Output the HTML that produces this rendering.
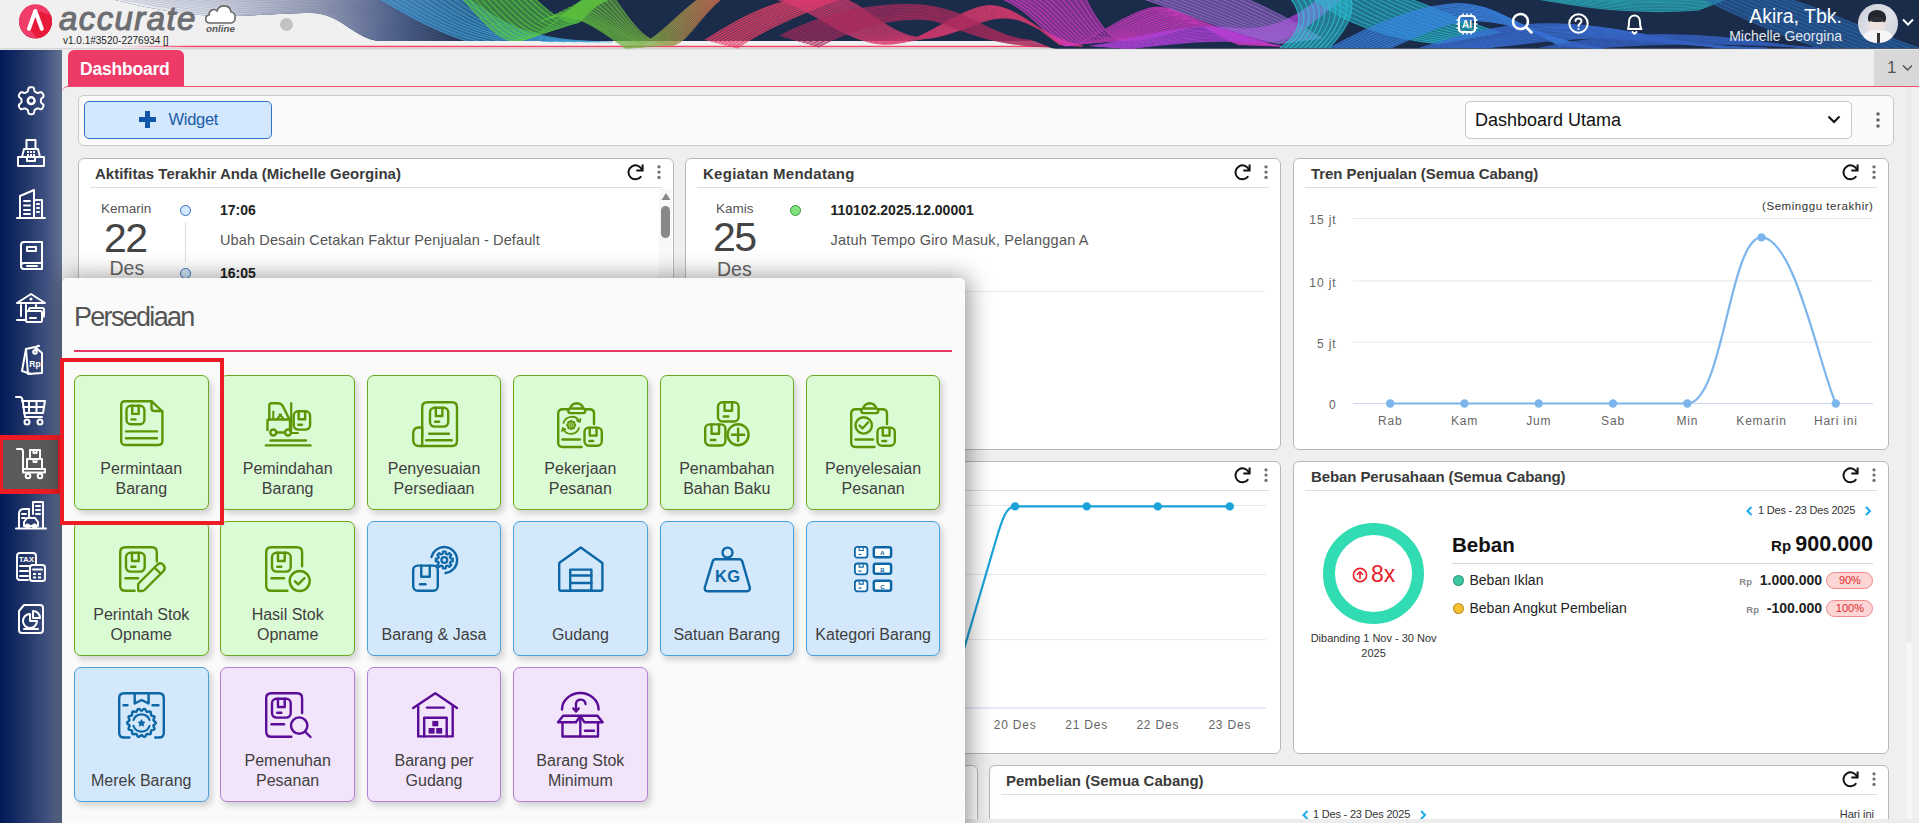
<!DOCTYPE html>
<html><head><meta charset="utf-8"><style>
*{box-sizing:border-box;margin:0;padding:0}
html,body{width:1919px;height:823px;overflow:hidden;background:#efefef;font-family:"Liberation Sans",sans-serif;color:#333}
body{position:relative}
.a{position:absolute}
.nw{white-space:nowrap}
#side{left:0;top:50px;width:62px;height:773px;background:linear-gradient(to right,#001a57 0%,#0f2660 20%,#25396a 45%,#3d4f7f 72%,#63718f 100%)}
.card{position:absolute;background:#fff;border:1px solid #b8b8b8;border-radius:6px;overflow:hidden}
.ct{position:absolute;left:16px;top:6px;font-size:15px;font-weight:bold;color:#3a3a3a;white-space:nowrap}
.cs{position:absolute;left:11px;right:11px;top:28px;height:1px;background:#dddddd}
.rf{position:absolute;top:6px;width:16px;height:16px}
.dt{position:absolute;top:6px;width:4px;height:16px}
.tile{position:absolute;width:134.5px;height:134.5px;border-radius:7px;border:1px solid;box-shadow:3px 4px 6px rgba(0,0,0,.16);text-align:center}
.tile .l{position:absolute;left:-10px;right:-10px;top:83px;font-size:16px;line-height:20px;color:#3f3f3f;white-space:nowrap}
.tile .l.one{top:103px}
.tile svg{position:absolute;overflow:visible}
.g{background:#dbfbd5;border-color:#6aa820}
.b{background:#d4e8fc;border-color:#4aa0da}
.p{background:#f2e4fa;border-color:#b47fd7}
.sico{position:absolute;left:14px;width:34px;height:34px;overflow:visible}
</style></head><body>

<div id="hdr" class="a" style="left:0;top:0;width:1919px;height:50px;overflow:hidden">
 <div class="a" style="left:0;top:0;width:1919px;height:48px;background:#f0f0f0;box-shadow:0 1px 2px rgba(0,0,0,.15)"></div>
 <svg class="a" style="left:0;top:0" width="1919" height="48" viewBox="0 0 1919 48">
  <defs>
   <linearGradient id="hg1" x1="0" y1="0" x2="1" y2="0">
    <stop offset="0" stop-color="#c8cbd8"/><stop offset="0.08" stop-color="#8a93b0"/><stop offset="0.16" stop-color="#3a6a9a"/><stop offset="0.25" stop-color="#1d2d4d"/><stop offset="1" stop-color="#1b2c4b"/>
   </linearGradient>
  </defs>
  <defs><linearGradient id="rl" gradientUnits="userSpaceOnUse" x1="120" y1="0" x2="190" y2="0"><stop offset="0" stop-color="#ee4466" stop-opacity="0"/><stop offset="1" stop-color="#ee4466"/></linearGradient></defs><line x1="62" y1="46.5" x2="1050" y2="46.5" stroke="url(#rl)" stroke-width="1.6"/>
 </svg>
 
 <svg class="a" style="left:0;top:0" width="1919" height="49" viewBox="0 0 1919 49">
  <defs>
   <clipPath id="navyclip"><path d="M115,0 C150,8 180,16 230,16 C270,15 290,13 310,13 C340,12 355,40 380,41 L1030,41 C1040,41 1045,48.8 1058,48.8 L1919,48.8 L1919,0 Z"/></clipPath>
   <clipPath id="ribclip"><path d="M115,0 C150,8 180,16 230,16 C270,15 290,13 310,13 C340,12 355,40 380,41 L540,41 L560,49 L1919,49 L1919,0 Z"/></clipPath>
   <linearGradient id="gA" gradientUnits="userSpaceOnUse" x1="110" y1="0" x2="470" y2="0"><stop offset="0" stop-color="#eef0f4"/><stop offset="0.3" stop-color="#d4d8e4"/><stop offset="0.55" stop-color="#a0a6bc"/><stop offset="0.8" stop-color="#4a5c88"/><stop offset="1" stop-color="#1b2c4b"/></linearGradient>
   <linearGradient id="gGO" gradientUnits="userSpaceOnUse" x1="540" y1="0" x2="720" y2="0"><stop offset="0" stop-color="#56c83a"/><stop offset="0.55" stop-color="#6fb040"/><stop offset="1" stop-color="#d06a50"/></linearGradient>
  </defs>
  <g clip-path="url(#navyclip)">
   <rect x="0" y="0" width="1919" height="49" fill="#1b2c4b"/>
   <rect x="100" y="0" width="370" height="48" fill="url(#gA)"/>
   <g fill="none" stroke="#6a7498" stroke-width=".8" opacity=".35"><path d="M118.0,-1.0 C170.0,8.0 210.0,17.0 250.0,16.0 C290.0,14.0 310.0,11.0 330.0,14.0 C352.0,18.0 366.0,38.0 400.0,42.0"/><path d="M126.2,-1.2 C177.0,7.1 217.0,15.3 256.5,14.3 C294.5,12.4 314.0,10.1 334.0,13.2 C356.8,17.4 372.4,36.7 408.0,41.8"/><path d="M134.4,-1.4 C184.0,6.2 224.0,13.6 263.0,12.6 C299.0,10.8 318.0,9.2 338.0,12.4 C361.6,16.8 378.8,35.4 416.0,41.6"/><path d="M142.6,-1.6 C191.0,5.3 231.0,11.9 269.5,10.9 C303.5,9.2 322.0,8.3 342.0,11.6 C366.4,16.2 385.2,34.1 424.0,41.4"/><path d="M150.8,-1.8 C198.0,4.4 238.0,10.2 276.0,9.2 C308.0,7.6 326.0,7.4 346.0,10.8 C371.2,15.6 391.6,32.8 432.0,41.2"/><path d="M159.0,-2.0 C205.0,3.5 245.0,8.5 282.5,7.5 C312.5,6.0 330.0,6.5 350.0,10.0 C376.0,15.0 398.0,31.5 440.0,41.0"/><path d="M167.2,-2.2 C212.0,2.6 252.0,6.8 289.0,5.8 C317.0,4.4 334.0,5.6 354.0,9.2 C380.8,14.4 404.4,30.2 448.0,40.8"/><path d="M175.4,-2.4 C219.0,1.7 259.0,5.1 295.5,4.1 C321.5,2.8 338.0,4.7 358.0,8.4 C385.6,13.8 410.8,28.9 456.0,40.6"/><path d="M183.6,-2.6 C226.0,0.8 266.0,3.4 302.0,2.4 C326.0,1.2 342.0,3.8 362.0,7.6 C390.4,13.2 417.2,27.6 464.0,40.4"/><path d="M191.8,-2.8 C233.0,-0.1 273.0,1.7 308.5,0.7 C330.5,-0.4 346.0,2.9 366.0,6.8 C395.2,12.6 423.6,26.3 472.0,40.2"/><path d="M200.0,-3.0 C240.0,-1.0 280.0,0.0 315.0,-1.0 C335.0,-2.0 350.0,2.0 370.0,6.0 C400.0,12.0 430.0,25.0 480.0,40.0"/></g>
  </g>
  <g clip-path="url(#ribclip)">
   <path d="M378.0,-2.0 C400.0,10.0 430.0,30.0 470.0,42.0 L612.5,42.0 C525.0,41.2 504.5,24.0 467.3,-2.0 Z" fill="#3fa0d8" opacity=".5"/>
<g fill="none" stroke="#3fa0d8" stroke-width="1.1" opacity=".75"><path d="M378.0,-2.0 C400.0,10.0 430.0,30.0 470.0,42.0"/><path d="M385.4,-2.0 C408.7,11.2 437.9,30.9 481.9,42.0"/><path d="M392.9,-2.0 C417.4,12.3 445.8,31.9 493.8,42.0"/><path d="M400.3,-2.0 C426.1,13.5 453.8,32.8 505.6,42.0"/><path d="M407.8,-2.0 C434.8,14.7 461.7,33.7 517.5,42.0"/><path d="M415.2,-2.0 C443.5,15.8 469.6,34.7 529.4,42.0"/><path d="M422.6,-2.0 C452.2,17.0 477.5,35.6 541.2,42.0"/><path d="M430.1,-2.0 C461.0,18.2 485.4,36.5 553.1,42.0"/><path d="M437.5,-2.0 C469.7,19.3 493.3,37.5 565.0,42.0"/><path d="M445.0,-2.0 C478.4,20.5 501.2,38.4 576.9,42.0"/><path d="M452.4,-2.0 C487.1,21.7 509.2,39.3 588.8,42.0"/><path d="M459.9,-2.0 C495.8,22.8 517.1,40.3 600.6,42.0"/><path d="M467.3,-2.0 C504.5,24.0 525.0,41.2 612.5,42.0"/></g>
<path d="M462.0,-2.0 C482.0,20.0 498.0,41.0 515.0,41.0 C540.0,41.0 560.0,15.0 585.0,-2.0 L613.5,-2.0 C588.5,5.2 587.5,18.6 577.7,22.8 C568.3,25.6 554.2,17.2 534.2,-2.0 Z" fill="#5ad040" opacity=".5"/>
<g fill="none" stroke="#5ad040" stroke-width="1.1" opacity=".75"><path d="M462.0,-2.0 C482.0,20.0 498.0,41.0 515.0,41.0 C540.0,41.0 560.0,15.0 585.0,-2.0"/><path d="M468.0,-2.0 C488.0,19.8 503.9,39.7 520.2,39.5 C544.0,39.1 562.4,14.2 587.4,-2.0"/><path d="M474.0,-2.0 C494.0,19.5 509.7,38.4 525.5,38.0 C547.9,37.3 564.8,13.4 589.8,-2.0"/><path d="M480.1,-2.0 C500.1,19.3 515.6,37.1 530.7,36.5 C551.9,35.4 567.1,12.6 592.1,-2.0"/><path d="M486.1,-2.0 C506.1,19.1 521.4,35.9 535.9,34.9 C555.8,33.5 569.5,11.7 594.5,-2.0"/><path d="M492.1,-2.0 C512.1,18.8 527.3,34.6 541.1,33.4 C559.8,31.7 571.9,10.9 596.9,-2.0"/><path d="M498.1,-2.0 C518.1,18.6 533.1,33.3 546.4,31.9 C563.8,29.8 574.2,10.1 599.2,-2.0"/><path d="M504.1,-2.0 C524.1,18.4 539.0,32.0 551.6,30.4 C567.7,27.9 576.6,9.3 601.6,-2.0"/><path d="M510.1,-2.0 C530.1,18.1 544.9,30.7 556.8,28.9 C571.7,26.1 579.0,8.5 604.0,-2.0"/><path d="M516.2,-2.0 C536.2,17.9 550.7,29.5 562.0,27.4 C575.6,24.2 581.4,7.7 606.4,-2.0"/><path d="M522.2,-2.0 C542.2,17.7 556.6,28.2 567.2,25.8 C579.6,22.3 583.8,6.8 608.8,-2.0"/><path d="M528.2,-2.0 C548.2,17.4 562.4,26.9 572.5,24.3 C583.5,20.5 586.1,6.0 611.1,-2.0"/><path d="M534.2,-2.0 C554.2,17.2 568.3,25.6 577.7,22.8 C587.5,18.6 588.5,5.2 613.5,-2.0"/></g>
<path d="M540.0,22.0 C570.0,5.0 600.0,30.0 625.0,48.0 C650.0,50.0 675.0,15.0 700.0,-2.0 L722.8,-2.0 C703.5,10.8 688.0,43.0 672.5,45.2 C638.0,44.0 627.0,12.0 606.5,-11.6 Z" fill="url(#gGO)" opacity=".5"/>
<g fill="none" stroke="url(#gGO)" stroke-width="1.1" opacity=".75"><path d="M540.0,22.0 C570.0,5.0 600.0,30.0 625.0,48.0 C650.0,50.0 675.0,15.0 700.0,-2.0"/><path d="M544.8,19.6 C574.1,5.5 602.7,31.0 628.4,47.8 C652.7,49.5 677.0,14.7 701.6,-2.0"/><path d="M549.5,17.2 C578.1,6.0 605.4,32.0 631.8,47.6 C655.4,49.0 679.1,14.4 703.3,-2.0"/><path d="M554.2,14.8 C582.2,6.5 608.1,33.0 635.2,47.4 C658.1,48.5 681.1,14.1 704.9,-2.0"/><path d="M559.0,12.4 C586.3,7.0 610.9,34.0 638.6,47.2 C660.9,48.0 683.1,13.8 706.5,-2.0"/><path d="M563.8,10.0 C590.4,7.5 613.6,35.0 642.0,47.0 C663.6,47.5 685.2,13.5 708.1,-2.0"/><path d="M568.5,7.6 C594.4,8.0 616.3,36.0 645.4,46.8 C666.3,47.0 687.2,13.2 709.8,-2.0"/><path d="M573.2,5.2 C598.5,8.5 619.0,37.0 648.8,46.6 C669.0,46.5 689.2,12.9 711.4,-2.0"/><path d="M578.0,2.8 C602.6,9.0 621.7,38.0 652.1,46.4 C671.7,46.0 691.3,12.6 713.0,-2.0"/><path d="M582.8,0.4 C606.6,9.5 624.4,39.0 655.5,46.2 C674.4,45.5 693.3,12.3 714.7,-2.0"/><path d="M587.5,-2.0 C610.7,10.0 627.1,40.0 658.9,46.0 C677.1,45.0 695.4,12.0 716.3,-2.0"/><path d="M592.2,-4.4 C614.8,10.5 629.9,41.0 662.3,45.8 C679.9,44.5 697.4,11.7 717.9,-2.0"/><path d="M597.0,-6.8 C618.9,11.0 632.6,42.0 665.7,45.6 C682.6,44.0 699.4,11.4 719.5,-2.0"/><path d="M601.8,-9.2 C622.9,11.5 635.3,43.0 669.1,45.4 C685.3,43.5 701.5,11.1 721.2,-2.0"/><path d="M606.5,-11.6 C627.0,12.0 638.0,44.0 672.5,45.2 C688.0,43.0 703.5,10.8 722.8,-2.0"/></g>
<path d="M705.0,40.0 C730.0,25.0 760.0,5.0 800.0,-2.0 L841.8,-2.0 C798.0,14.8 758.5,32.0 737.3,48.4 Z" fill="#e8406a" opacity=".5"/>
<g fill="none" stroke="#e8406a" stroke-width="1.1" opacity=".75"><path d="M705.0,40.0 C730.0,25.0 760.0,5.0 800.0,-2.0"/><path d="M708.2,40.8 C732.9,25.7 763.8,6.0 804.2,-2.0"/><path d="M711.5,41.7 C735.7,26.4 767.6,7.0 808.4,-2.0"/><path d="M714.7,42.5 C738.5,27.1 771.4,7.9 812.5,-2.0"/><path d="M717.9,43.4 C741.4,27.8 775.2,8.9 816.7,-2.0"/><path d="M721.1,44.2 C744.2,28.5 779.0,9.9 820.9,-2.0"/><path d="M724.4,45.0 C747.1,29.2 782.8,10.9 825.1,-2.0"/><path d="M727.6,45.9 C749.9,29.9 786.6,11.9 829.3,-2.0"/><path d="M730.8,46.7 C752.8,30.6 790.4,12.8 833.4,-2.0"/><path d="M734.1,47.6 C755.6,31.3 794.2,13.8 837.6,-2.0"/><path d="M737.3,48.4 C758.5,32.0 798.0,14.8 841.8,-2.0"/></g>
<path d="M770.0,-2.0 C810.0,5.0 840.0,40.0 880.0,44.0 C920.0,48.0 950.0,12.0 985.0,6.0 C1010.0,2.0 1040.0,30.0 1060.0,45.0 L1082.8,46.4 C1040.0,37.0 1029.0,13.2 994.5,18.6 C969.0,23.2 939.0,45.2 908.5,35.6 C878.0,26.0 857.5,-2.0 836.5,-2.0 Z" fill="#dc3a70" opacity=".5"/>
<g fill="none" stroke="#dc3a70" stroke-width="1.1" opacity=".75"><path d="M770.0,-2.0 C810.0,5.0 840.0,40.0 880.0,44.0 C920.0,48.0 950.0,12.0 985.0,6.0 C1010.0,2.0 1040.0,30.0 1060.0,45.0"/><path d="M774.8,-2.0 C813.4,4.5 842.7,39.0 882.0,43.4 C921.4,47.8 951.4,12.8 985.7,6.9 C1011.4,2.8 1040.0,30.5 1061.6,45.1"/><path d="M779.5,-2.0 C816.8,4.0 845.4,38.0 884.1,42.8 C922.7,47.6 952.7,13.6 986.4,7.8 C1012.7,3.6 1040.0,31.0 1063.3,45.2"/><path d="M784.2,-2.0 C820.2,3.5 848.1,37.0 886.1,42.2 C924.1,47.4 954.1,14.4 987.0,8.7 C1014.1,4.4 1040.0,31.5 1064.9,45.3"/><path d="M789.0,-2.0 C823.6,3.0 850.9,36.0 888.1,41.6 C925.4,47.2 955.4,15.2 987.7,9.6 C1015.4,5.2 1040.0,32.0 1066.5,45.4"/><path d="M793.8,-2.0 C827.0,2.5 853.6,35.0 890.2,41.0 C926.8,47.0 956.8,16.0 988.4,10.5 C1016.8,6.0 1040.0,32.5 1068.1,45.5"/><path d="M798.5,-2.0 C830.4,2.0 856.3,34.0 892.2,40.4 C928.1,46.8 958.1,16.8 989.1,11.4 C1018.1,6.8 1040.0,33.0 1069.8,45.6"/><path d="M803.2,-2.0 C833.8,1.5 859.0,33.0 894.2,39.8 C929.5,46.6 959.5,17.6 989.8,12.3 C1019.5,7.6 1040.0,33.5 1071.4,45.7"/><path d="M808.0,-2.0 C837.1,1.0 861.7,32.0 896.3,39.2 C930.9,46.4 960.9,18.4 990.4,13.2 C1020.9,8.4 1040.0,34.0 1073.0,45.8"/><path d="M812.8,-2.0 C840.5,0.5 864.4,31.0 898.3,38.6 C932.2,46.2 962.2,19.2 991.1,14.1 C1022.2,9.2 1040.0,34.5 1074.7,45.9"/><path d="M817.5,-2.0 C843.9,-0.0 867.1,30.0 900.4,38.0 C933.6,46.0 963.6,20.0 991.8,15.0 C1023.6,10.0 1040.0,35.0 1076.3,46.0"/><path d="M822.2,-2.0 C847.3,-0.5 869.9,29.0 902.4,37.4 C934.9,45.8 964.9,20.8 992.5,15.9 C1024.9,10.8 1040.0,35.5 1077.9,46.1"/><path d="M827.0,-2.0 C850.7,-1.0 872.6,28.0 904.4,36.8 C936.3,45.6 966.3,21.6 993.1,16.8 C1026.3,11.6 1040.0,36.0 1079.5,46.2"/><path d="M831.8,-2.0 C854.1,-1.5 875.3,27.0 906.5,36.2 C937.6,45.4 967.6,22.4 993.8,17.7 C1027.6,12.4 1040.0,36.5 1081.2,46.3"/><path d="M836.5,-2.0 C857.5,-2.0 878.0,26.0 908.5,35.6 C939.0,45.2 969.0,23.2 994.5,18.6 C1029.0,13.2 1040.0,37.0 1082.8,46.4"/></g>
<path d="M780.0,36.0 C820.0,14.0 880.0,0.0 930.0,6.0 C970.0,12.0 1000.0,40.0 1030.0,40.0 L1049.0,47.0 C981.0,45.6 951.0,23.2 930.0,20.0 C899.0,16.8 858.0,25.2 818.0,47.2 Z" fill="#a82a5c" opacity=".5"/>
<g fill="none" stroke="#a82a5c" stroke-width="1.1" opacity=".75"><path d="M780.0,36.0 C820.0,14.0 880.0,0.0 930.0,6.0 C970.0,12.0 1000.0,40.0 1030.0,40.0"/><path d="M783.8,37.1 C823.8,15.1 881.9,1.7 930.0,7.4 C968.1,13.1 998.1,40.6 1031.9,40.7"/><path d="M787.6,38.2 C827.6,16.2 883.8,3.4 930.0,8.8 C966.2,14.2 996.2,41.1 1033.8,41.4"/><path d="M791.4,39.4 C831.4,17.4 885.7,5.0 930.0,10.2 C964.3,15.4 994.3,41.7 1035.7,42.1"/><path d="M795.2,40.5 C835.2,18.5 887.6,6.7 930.0,11.6 C962.4,16.5 992.4,42.2 1037.6,42.8"/><path d="M799.0,41.6 C839.0,19.6 889.5,8.4 930.0,13.0 C960.5,17.6 990.5,42.8 1039.5,43.5"/><path d="M802.8,42.7 C842.8,20.7 891.4,10.1 930.0,14.4 C958.6,18.7 988.6,43.4 1041.4,44.2"/><path d="M806.6,43.8 C846.6,21.8 893.3,11.8 930.0,15.8 C956.7,19.8 986.7,43.9 1043.3,44.9"/><path d="M810.4,45.0 C850.4,23.0 895.2,13.4 930.0,17.2 C954.8,21.0 984.8,44.5 1045.2,45.6"/><path d="M814.2,46.1 C854.2,24.1 897.1,15.1 930.0,18.6 C952.9,22.1 982.9,45.0 1047.1,46.3"/><path d="M818.0,47.2 C858.0,25.2 899.0,16.8 930.0,20.0 C951.0,23.2 981.0,45.6 1049.0,47.0"/></g>
<path d="M1000.0,-2.0 C1030.0,10.0 1045.0,35.0 1065.0,46.0 C1090.0,46.0 1110.0,20.0 1150.0,8.0 C1180.0,2.0 1200.0,30.0 1240.0,45.0 L1281.8,46.4 C1238.0,38.4 1218.0,21.6 1188.0,27.6 C1167.0,34.0 1128.0,46.0 1112.5,37.6 C1102.0,28.0 1090.8,10.0 1085.5,-2.0 Z" fill="#d43ac4" opacity=".5"/>
<g fill="none" stroke="#d43ac4" stroke-width="1.1" opacity=".75"><path d="M1000.0,-2.0 C1030.0,10.0 1045.0,35.0 1065.0,46.0 C1090.0,46.0 1110.0,20.0 1150.0,8.0 C1180.0,2.0 1200.0,30.0 1240.0,45.0"/><path d="M1006.1,-2.0 C1034.3,10.0 1049.1,34.5 1068.4,45.4 C1092.7,46.0 1114.1,21.0 1152.7,9.4 C1182.7,3.4 1202.7,30.6 1243.0,45.1"/><path d="M1012.2,-2.0 C1038.7,10.0 1053.1,34.0 1071.8,44.8 C1095.4,46.0 1118.1,22.0 1155.4,10.8 C1185.4,4.8 1205.4,31.2 1246.0,45.2"/><path d="M1018.3,-2.0 C1043.0,10.0 1057.2,33.5 1075.2,44.2 C1098.1,46.0 1122.2,23.0 1158.1,12.2 C1188.1,6.2 1208.1,31.8 1249.0,45.3"/><path d="M1024.4,-2.0 C1047.4,10.0 1061.3,33.0 1078.6,43.6 C1100.9,46.0 1126.3,24.0 1160.9,13.6 C1190.9,7.6 1210.9,32.4 1251.9,45.4"/><path d="M1030.5,-2.0 C1051.7,10.0 1065.4,32.5 1082.0,43.0 C1103.6,46.0 1130.4,25.0 1163.6,15.0 C1193.6,9.0 1213.6,33.0 1254.9,45.5"/><path d="M1036.6,-2.0 C1056.1,10.0 1069.4,32.0 1085.4,42.4 C1106.3,46.0 1134.4,26.0 1166.3,16.4 C1196.3,10.4 1216.3,33.6 1257.9,45.6"/><path d="M1042.8,-2.0 C1060.4,10.0 1073.5,31.5 1088.8,41.8 C1109.0,46.0 1138.5,27.0 1169.0,17.8 C1199.0,11.8 1219.0,34.2 1260.9,45.7"/><path d="M1048.9,-2.0 C1064.7,10.0 1077.6,31.0 1092.1,41.2 C1111.7,46.0 1142.6,28.0 1171.7,19.2 C1201.7,13.2 1221.7,34.8 1263.9,45.8"/><path d="M1055.0,-2.0 C1069.1,10.0 1081.6,30.5 1095.5,40.6 C1114.4,46.0 1146.6,29.0 1174.4,20.6 C1204.4,14.6 1224.4,35.4 1266.9,45.9"/><path d="M1061.1,-2.0 C1073.4,10.0 1085.7,30.0 1098.9,40.0 C1117.1,46.0 1150.7,30.0 1177.1,22.0 C1207.1,16.0 1227.1,36.0 1269.9,46.0"/><path d="M1067.2,-2.0 C1077.8,10.0 1089.8,29.5 1102.3,39.4 C1119.9,46.0 1154.8,31.0 1179.9,23.4 C1209.9,17.4 1229.9,36.6 1272.8,46.1"/><path d="M1073.3,-2.0 C1082.1,10.0 1093.9,29.0 1105.7,38.8 C1122.6,46.0 1158.9,32.0 1182.6,24.8 C1212.6,18.8 1232.6,37.2 1275.8,46.2"/><path d="M1079.4,-2.0 C1086.5,10.0 1097.9,28.5 1109.1,38.2 C1125.3,46.0 1162.9,33.0 1185.3,26.2 C1215.3,20.2 1235.3,37.8 1278.8,46.3"/><path d="M1085.5,-2.0 C1090.8,10.0 1102.0,28.0 1112.5,37.6 C1128.0,46.0 1167.0,34.0 1188.0,27.6 C1218.0,21.6 1238.0,38.4 1281.8,46.4"/></g>
<path d="M1090.0,46.0 C1140.0,40.0 1180.0,22.0 1230.0,28.0 C1270.0,33.0 1295.0,18.0 1320.0,-2.0 L1342.8,-2.0 C1304.5,29.2 1289.0,45.6 1249.0,42.0 C1199.0,38.8 1159.0,45.6 1128.0,48.8 Z" fill="#b040d8" opacity=".5"/>
<g fill="none" stroke="#b040d8" stroke-width="1.1" opacity=".75"><path d="M1090.0,46.0 C1140.0,40.0 1180.0,22.0 1230.0,28.0 C1270.0,33.0 1295.0,18.0 1320.0,-2.0"/><path d="M1093.8,46.3 C1141.9,40.6 1181.9,23.7 1231.9,29.4 C1271.9,34.3 1296.0,19.1 1322.3,-2.0"/><path d="M1097.6,46.6 C1143.8,41.1 1183.8,25.4 1233.8,30.8 C1273.8,35.5 1296.9,20.2 1324.6,-2.0"/><path d="M1101.4,46.8 C1145.7,41.7 1185.7,27.0 1235.7,32.2 C1275.7,36.8 1297.8,21.4 1326.8,-2.0"/><path d="M1105.2,47.1 C1147.6,42.2 1187.6,28.7 1237.6,33.6 C1277.6,38.0 1298.8,22.5 1329.1,-2.0"/><path d="M1109.0,47.4 C1149.5,42.8 1189.5,30.4 1239.5,35.0 C1279.5,39.3 1299.8,23.6 1331.4,-2.0"/><path d="M1112.8,47.7 C1151.4,43.4 1191.4,32.1 1241.4,36.4 C1281.4,40.6 1300.7,24.7 1333.7,-2.0"/><path d="M1116.6,48.0 C1153.3,43.9 1193.3,33.8 1243.3,37.8 C1283.3,41.8 1301.7,25.8 1336.0,-2.0"/><path d="M1120.4,48.2 C1155.2,44.5 1195.2,35.4 1245.2,39.2 C1285.2,43.1 1302.6,27.0 1338.2,-2.0"/><path d="M1124.2,48.5 C1157.1,45.0 1197.1,37.1 1247.1,40.6 C1287.1,44.3 1303.5,28.1 1340.5,-2.0"/><path d="M1128.0,48.8 C1159.0,45.6 1199.0,38.8 1249.0,42.0 C1289.0,45.6 1304.5,29.2 1342.8,-2.0"/></g>
<path d="M1140.0,-2.0 C1180.0,10.0 1220.0,30.0 1280.0,44.0 L1321.8,38.4 C1299.8,24.4 1265.5,7.2 1244.5,-2.0 Z" fill="#9a6ad0" opacity=".5"/>
<g fill="none" stroke="#9a6ad0" stroke-width="1.1" opacity=".75"><path d="M1140.0,-2.0 C1180.0,10.0 1220.0,30.0 1280.0,44.0"/><path d="M1148.7,-2.0 C1187.1,9.8 1226.6,29.5 1283.5,43.5"/><path d="M1157.4,-2.0 C1194.2,9.5 1233.3,29.1 1287.0,43.1"/><path d="M1166.1,-2.0 C1201.4,9.3 1240.0,28.6 1290.5,42.6"/><path d="M1174.8,-2.0 C1208.5,9.1 1246.6,28.1 1293.9,42.1"/><path d="M1183.5,-2.0 C1215.6,8.8 1253.2,27.7 1297.4,41.7"/><path d="M1192.2,-2.0 C1222.8,8.6 1259.9,27.2 1300.9,41.2"/><path d="M1201.0,-2.0 C1229.9,8.4 1266.5,26.7 1304.4,40.7"/><path d="M1209.7,-2.0 C1237.0,8.1 1273.2,26.3 1307.9,40.3"/><path d="M1218.4,-2.0 C1244.1,7.9 1279.8,25.8 1311.3,39.8"/><path d="M1227.1,-2.0 C1251.2,7.7 1286.5,25.3 1314.8,39.3"/><path d="M1235.8,-2.0 C1258.4,7.4 1293.2,24.9 1318.3,38.9"/><path d="M1244.5,-2.0 C1265.5,7.2 1299.8,24.4 1321.8,38.4"/></g>
<path d="M1290.0,-2.0 C1305.0,16.0 1300.0,34.0 1280.0,48.0 L1329.4,48.0 C1341.8,34.0 1356.3,16.0 1350.8,-2.0 Z" fill="#30c8d8" opacity=".5"/>
<g fill="none" stroke="#30c8d8" stroke-width="1.1" opacity=".75"><path d="M1290.0,-2.0 C1305.0,16.0 1300.0,34.0 1280.0,48.0"/><path d="M1296.1,-2.0 C1310.1,16.0 1304.2,34.0 1284.9,48.0"/><path d="M1302.2,-2.0 C1315.3,16.0 1308.4,34.0 1289.9,48.0"/><path d="M1308.2,-2.0 C1320.4,16.0 1312.5,34.0 1294.8,48.0"/><path d="M1314.3,-2.0 C1325.5,16.0 1316.7,34.0 1299.8,48.0"/><path d="M1320.4,-2.0 C1330.7,16.0 1320.9,34.0 1304.7,48.0"/><path d="M1326.5,-2.0 C1335.8,16.0 1325.1,34.0 1309.6,48.0"/><path d="M1332.6,-2.0 C1340.9,16.0 1329.3,34.0 1314.6,48.0"/><path d="M1338.6,-2.0 C1346.0,16.0 1333.4,34.0 1319.5,48.0"/><path d="M1344.7,-2.0 C1351.2,16.0 1337.6,34.0 1324.5,48.0"/><path d="M1350.8,-2.0 C1356.3,16.0 1341.8,34.0 1329.4,48.0"/></g>
<path d="M1312.0,-2.0 C1340.0,20.0 1380.0,38.0 1440.0,44.0 L1500.8,32.8 C1459.8,21.2 1438.8,8.8 1407.0,-2.0 Z" fill="#2ab8cc" opacity=".5"/>
<g fill="none" stroke="#2ab8cc" stroke-width="1.1" opacity=".75"><path d="M1312.0,-2.0 C1340.0,20.0 1380.0,38.0 1440.0,44.0"/><path d="M1319.9,-2.0 C1348.2,19.1 1386.7,36.6 1445.1,43.1"/><path d="M1327.8,-2.0 C1356.5,18.1 1393.3,35.2 1450.1,42.1"/><path d="M1335.8,-2.0 C1364.7,17.2 1400.0,33.8 1455.2,41.2"/><path d="M1343.7,-2.0 C1372.9,16.3 1406.6,32.4 1460.3,40.3"/><path d="M1351.6,-2.0 C1381.2,15.3 1413.2,31.0 1465.3,39.3"/><path d="M1359.5,-2.0 C1389.4,14.4 1419.9,29.6 1470.4,38.4"/><path d="M1367.4,-2.0 C1397.6,13.5 1426.6,28.2 1475.5,37.5"/><path d="M1375.3,-2.0 C1405.9,12.5 1433.2,26.8 1480.5,36.5"/><path d="M1383.2,-2.0 C1414.1,11.6 1439.8,25.4 1485.6,35.6"/><path d="M1391.2,-2.0 C1422.3,10.7 1446.5,24.0 1490.7,34.7"/><path d="M1399.1,-2.0 C1430.6,9.7 1453.1,22.6 1495.7,33.7"/><path d="M1407.0,-2.0 C1438.8,8.8 1459.8,21.2 1500.8,32.8"/></g>
<path d="M1330.0,48.0 C1370.0,26.0 1410.0,8.0 1450.0,4.0 C1490.0,0.0 1520.0,26.0 1560.0,46.0 L1601.8,48.8 C1539.0,37.2 1509.0,19.6 1469.0,20.8 C1448.0,22.0 1427.0,31.6 1390.8,48.0 Z" fill="#3a84e4" opacity=".5"/>
<g fill="none" stroke="#3a84e4" stroke-width="1.1" opacity=".75"><path d="M1330.0,48.0 C1370.0,26.0 1410.0,8.0 1450.0,4.0 C1490.0,0.0 1520.0,26.0 1560.0,46.0"/><path d="M1335.1,48.0 C1374.8,26.5 1413.2,9.2 1451.6,5.4 C1491.6,1.6 1521.6,26.9 1563.5,46.2"/><path d="M1340.1,48.0 C1379.5,26.9 1416.3,10.3 1453.2,6.8 C1493.2,3.3 1523.2,27.9 1567.0,46.5"/><path d="M1345.2,48.0 C1384.2,27.4 1419.5,11.5 1454.8,8.2 C1494.8,4.9 1524.8,28.8 1570.5,46.7"/><path d="M1350.3,48.0 C1389.0,27.9 1422.7,12.7 1456.3,9.6 C1496.3,6.5 1526.3,29.7 1573.9,46.9"/><path d="M1355.3,48.0 C1393.8,28.3 1425.8,13.8 1457.9,11.0 C1497.9,8.2 1527.9,30.7 1577.4,47.2"/><path d="M1360.4,48.0 C1398.5,28.8 1429.0,15.0 1459.5,12.4 C1499.5,9.8 1529.5,31.6 1580.9,47.4"/><path d="M1365.5,48.0 C1403.2,29.3 1432.2,16.2 1461.1,13.8 C1501.1,11.4 1531.1,32.5 1584.4,47.6"/><path d="M1370.5,48.0 C1408.0,29.7 1435.3,17.3 1462.7,15.2 C1502.7,13.1 1532.7,33.5 1587.9,47.9"/><path d="M1375.6,48.0 C1412.8,30.2 1438.5,18.5 1464.2,16.6 C1504.2,14.7 1534.2,34.4 1591.3,48.1"/><path d="M1380.7,48.0 C1417.5,30.7 1441.7,19.7 1465.8,18.0 C1505.8,16.3 1535.8,35.3 1594.8,48.3"/><path d="M1385.7,48.0 C1422.2,31.1 1444.8,20.8 1467.4,19.4 C1507.4,18.0 1537.4,36.3 1598.3,48.6"/><path d="M1390.8,48.0 C1427.0,31.6 1448.0,22.0 1469.0,20.8 C1509.0,19.6 1539.0,37.2 1601.8,48.8"/></g>
<path d="M1420.0,48.0 C1460.0,36.0 1500.0,22.0 1560.0,24.0 C1620.0,26.0 1660.0,40.0 1720.0,48.0 L1767.5,48.0 C1698.0,48.4 1658.0,40.0 1598.0,38.0 C1557.0,38.8 1517.0,44.4 1486.5,48.0 Z" fill="#3a6fd8" opacity=".5"/>
<g fill="none" stroke="#3a6fd8" stroke-width="1.1" opacity=".75"><path d="M1420.0,48.0 C1460.0,36.0 1500.0,22.0 1560.0,24.0 C1620.0,26.0 1660.0,40.0 1720.0,48.0"/><path d="M1425.5,48.0 C1464.8,36.7 1504.8,23.4 1563.2,25.2 C1623.2,27.2 1663.2,40.7 1724.0,48.0"/><path d="M1431.1,48.0 C1469.5,37.4 1509.5,24.8 1566.3,26.3 C1626.3,28.3 1666.3,41.4 1727.9,48.0"/><path d="M1436.6,48.0 C1474.2,38.1 1514.2,26.2 1569.5,27.5 C1629.5,29.5 1669.5,42.1 1731.9,48.0"/><path d="M1442.2,48.0 C1479.0,38.8 1519.0,27.6 1572.7,28.7 C1632.7,30.7 1672.7,42.8 1735.8,48.0"/><path d="M1447.7,48.0 C1483.8,39.5 1523.8,29.0 1575.8,29.8 C1635.8,31.8 1675.8,43.5 1739.8,48.0"/><path d="M1453.2,48.0 C1488.5,40.2 1528.5,30.4 1579.0,31.0 C1639.0,33.0 1679.0,44.2 1743.8,48.0"/><path d="M1458.8,48.0 C1493.2,40.9 1533.2,31.8 1582.2,32.2 C1642.2,34.2 1682.2,44.9 1747.7,48.0"/><path d="M1464.3,48.0 C1498.0,41.6 1538.0,33.2 1585.3,33.3 C1645.3,35.3 1685.3,45.6 1751.7,48.0"/><path d="M1469.9,48.0 C1502.8,42.3 1542.8,34.6 1588.5,34.5 C1648.5,36.5 1688.5,46.3 1755.6,48.0"/><path d="M1475.4,48.0 C1507.5,43.0 1547.5,36.0 1591.7,35.7 C1651.7,37.7 1691.7,47.0 1759.6,48.0"/><path d="M1481.0,48.0 C1512.2,43.7 1552.2,37.4 1594.8,36.8 C1654.8,38.8 1694.8,47.7 1763.5,48.0"/><path d="M1486.5,48.0 C1517.0,44.4 1557.0,38.8 1598.0,38.0 C1658.0,40.0 1698.0,48.4 1767.5,48.0"/></g>
<path d="M1530.0,-2.0 C1570.0,4.0 1620.0,16.0 1700.0,10.0 L1741.8,-6.8 C1658.0,-0.8 1627.0,-1.6 1596.5,-2.0 Z" fill="#2aa6b4" opacity=".5"/>
<g fill="none" stroke="#2aa6b4" stroke-width="1.1" opacity=".75"><path d="M1530.0,-2.0 C1570.0,4.0 1620.0,16.0 1700.0,10.0"/><path d="M1536.7,-2.0 C1575.7,3.4 1623.8,14.3 1704.2,8.3"/><path d="M1543.3,-2.0 C1581.4,2.9 1627.6,12.6 1708.4,6.6"/><path d="M1550.0,-2.0 C1587.1,2.3 1631.4,11.0 1712.5,5.0"/><path d="M1556.6,-2.0 C1592.8,1.8 1635.2,9.3 1716.7,3.3"/><path d="M1563.2,-2.0 C1598.5,1.2 1639.0,7.6 1720.9,1.6"/><path d="M1569.9,-2.0 C1604.2,0.6 1642.8,5.9 1725.1,-0.1"/><path d="M1576.5,-2.0 C1609.9,0.1 1646.6,4.2 1729.3,-1.8"/><path d="M1583.2,-2.0 C1615.6,-0.5 1650.4,2.6 1733.4,-3.4"/><path d="M1589.9,-2.0 C1621.3,-1.0 1654.2,0.9 1737.6,-5.1"/><path d="M1596.5,-2.0 C1627.0,-1.6 1658.0,-0.8 1741.8,-6.8"/></g>
<path d="M1700.0,-2.0 C1740.0,16.0 1770.0,32.0 1820.0,48.0 L1918.8,48.0 C1849.8,23.6 1819.8,7.6 1785.5,-2.0 Z" fill="#2a68b0" opacity=".5"/>
<g fill="none" stroke="#2a68b0" stroke-width="1.1" opacity=".75"><path d="M1700.0,-2.0 C1740.0,16.0 1770.0,32.0 1820.0,48.0"/><path d="M1708.5,-2.0 C1748.0,15.2 1778.0,31.2 1829.9,48.0"/><path d="M1717.1,-2.0 C1756.0,14.3 1786.0,30.3 1839.8,48.0"/><path d="M1725.7,-2.0 C1763.9,13.5 1793.9,29.5 1849.6,48.0"/><path d="M1734.2,-2.0 C1771.9,12.6 1801.9,28.6 1859.5,48.0"/><path d="M1742.8,-2.0 C1779.9,11.8 1809.9,27.8 1869.4,48.0"/><path d="M1751.3,-2.0 C1787.9,11.0 1817.9,27.0 1879.3,48.0"/><path d="M1759.8,-2.0 C1795.9,10.1 1825.9,26.1 1889.2,48.0"/><path d="M1768.4,-2.0 C1803.8,9.3 1833.8,25.3 1899.0,48.0"/><path d="M1777.0,-2.0 C1811.8,8.4 1841.8,24.4 1908.9,48.0"/><path d="M1785.5,-2.0 C1819.8,7.6 1849.8,23.6 1918.8,48.0"/></g>
<path d="M1540.0,48.0 C1620.0,30.0 1700.0,30.0 1800.0,48.0 L1819.0,48.0 C1738.0,44.0 1677.0,41.2 1597.0,48.0 Z" fill="#3560c0" opacity=".5"/>
<g fill="none" stroke="#3560c0" stroke-width="1.1" opacity=".75"><path d="M1540.0,48.0 C1620.0,30.0 1700.0,30.0 1800.0,48.0"/><path d="M1545.7,48.0 C1625.7,31.1 1703.8,31.4 1801.9,48.0"/><path d="M1551.4,48.0 C1631.4,32.2 1707.6,32.8 1803.8,48.0"/><path d="M1557.1,48.0 C1637.1,33.4 1711.4,34.2 1805.7,48.0"/><path d="M1562.8,48.0 C1642.8,34.5 1715.2,35.6 1807.6,48.0"/><path d="M1568.5,48.0 C1648.5,35.6 1719.0,37.0 1809.5,48.0"/><path d="M1574.2,48.0 C1654.2,36.7 1722.8,38.4 1811.4,48.0"/><path d="M1579.9,48.0 C1659.9,37.8 1726.6,39.8 1813.3,48.0"/><path d="M1585.6,48.0 C1665.6,39.0 1730.4,41.2 1815.2,48.0"/><path d="M1591.3,48.0 C1671.3,40.1 1734.2,42.6 1817.1,48.0"/><path d="M1597.0,48.0 C1677.0,41.2 1738.0,44.0 1819.0,48.0"/></g>
  </g>
 </svg>

 <!-- logo -->
 <svg class="a" style="left:19px;top:4px" width="34" height="35" viewBox="0 0 34 35"><defs><clipPath id="lgc"><ellipse cx="16.5" cy="17.2" rx="16.5" ry="17"/></clipPath></defs>
 <ellipse cx="16.5" cy="17.8" rx="16.3" ry="16.8" fill="#b8102c"/>
 <g clip-path="url(#lgc)"><rect x="0" y="0" width="34" height="35" fill="#ef3c69"/><path d="M16.5,6 L34,11.5 L34,36 L20,36 L10,25 Z" fill="#e71a3c"/></g>
 <path d="M10,24.8 L16.3,7 L22.8,24.8" fill="none" stroke="#fff" stroke-width="4" stroke-linejoin="round" stroke-linecap="round"/></svg>
 <div class="a nw" style="left:59px;top:0px;font-size:33px;font-style:italic;color:#6d6e71;letter-spacing:1.4px;-webkit-text-stroke:1.1px #6d6e71">accurate</div>
 <svg class="a" style="left:203px;top:2px" width="34" height="23" viewBox="0 0 34 23"><path d="M7,21 C2,21 1,14 6,13 C6,8 11,6 14,9 C16,2 27,2 28,10 C33,10 34,20 28,21 Z" fill="#fff" stroke="#6a6a6a" stroke-width="1.6"/></svg>
 <div class="a nw" style="left:206px;top:23px;font-size:9.8px;font-style:italic;font-weight:bold;color:#58595b">online</div>
 <div class="a nw" style="left:63px;top:35px;font-size:10px;color:#222">v1.0.1#3520-2276934 []</div>
 <div class="a" style="left:280px;top:18px;width:13px;height:13px;border-radius:50%;background:#c2c2c2"></div>
 <!-- right icons -->
 <svg class="a" style="left:1455px;top:12px" width="24" height="24" viewBox="0 0 24 24" fill="none" stroke="#fff">
  <rect x="4" y="4" width="16" height="16" rx="3" stroke-width="2"/>
  <path d="M8,1.5v2.5M12,1.5v2.5M16,1.5v2.5M8,20v2.5M12,20v2.5M16,20v2.5M1.5,8h2.5M1.5,12h2.5M1.5,16h2.5M20,8h2.5M20,12h2.5M20,16h2.5" stroke-width="1.6"/>
  <text x="12" y="16" text-anchor="middle" font-family="Liberation Sans" font-weight="bold" font-size="10" fill="#fff" stroke="none">AI</text>
 </svg>
 <svg class="a" style="left:1510px;top:11px" width="24" height="24" viewBox="0 0 24 24" fill="none" stroke="#fff" stroke-width="2.6" stroke-linecap="round"><circle cx="10.5" cy="10.5" r="7.5"/><path d="M16,16 L21.5,21.5"/></svg>
 <svg class="a" style="left:1567px;top:12px" width="23" height="23" viewBox="0 0 23 23" fill="none" stroke="#fff" stroke-width="2"><circle cx="11.5" cy="11.5" r="9.2"/><path d="M8.5,9 C8.5,5.5 14.5,5.5 14.5,9 C14.5,11.5 11.5,11.5 11.5,14" stroke-linecap="round"/><circle cx="11.5" cy="17" r="1.1" fill="#fff" stroke="none"/></svg>
 <svg class="a" style="left:1623px;top:12px" width="23" height="24" viewBox="0 0 23 24" fill="none" stroke="#fff" stroke-width="2" stroke-linejoin="round"><path d="M5,17 C6,15 6,13 6,10 C6,6 8.5,3.5 11.5,3.5 C14.5,3.5 17,6 17,10 C17,13 17,15 18.5,17 Z"/><path d="M9.5,20 L11.5,21.8 L13.5,20" stroke-linecap="round"/></svg>
 <div class="a nw" style="right:77px;top:5px;font-size:19.5px;color:#fff;text-align:right">Akira, Tbk.</div>
 <div class="a nw" style="right:77px;top:28px;font-size:14px;color:#e4e8f0;text-align:right">Michelle Georgina</div>
 <div class="a" style="left:1858px;top:3.5px;width:40px;height:39.5px;border-radius:50%;background:linear-gradient(135deg,#c9ceda,#dfe1e8 50%,#cfd3dd);overflow:hidden"><div class="a" style="left:10px;top:6px;width:18px;height:14px;border-radius:50% 50% 35% 35%;background:#23262e;filter:blur(.6px)"></div><div class="a" style="left:10px;top:16px;width:17px;height:12px;border-radius:40%;background:#eee2de;filter:blur(.5px)"></div><div class="a" style="left:12px;top:13px;width:14px;height:5px;border-radius:40%;background:#2e3038;filter:blur(.5px)"></div><div class="a" style="left:6px;top:26px;width:28px;height:16px;border-radius:40% 40% 0 0;background:#f5f5f7;filter:blur(.5px)"></div><div class="a" style="left:19px;top:29px;width:2.5px;height:10px;background:#333"></div></div>
 <svg class="a" style="left:1902px;top:18px" width="12" height="9" viewBox="0 0 12 9" fill="none" stroke="#fff" stroke-width="2"><path d="M1,1.5 L6,6.5 L11,1.5"/></svg>
</div>
<div class="a" style="left:68px;top:50px;width:116px;height:37px;background:#ee3a66;border-radius:6px 6px 0 0"></div>
<div class="a nw" style="left:80px;top:59px;font-size:17.5px;font-weight:bold;color:#fff;letter-spacing:-.2px">Dashboard</div>
<div class="a" style="left:1874px;top:50px;width:45px;height:37px;background:#d8d8d8"></div>
<div class="a nw" style="left:1887px;top:58px;font-size:17px;color:#555">1</div>
<svg class="a" style="left:1902px;top:64px" width="11" height="8" viewBox="0 0 11 8" fill="none" stroke="#555" stroke-width="1.5"><path d="M1,1.5 L5.5,6 L10,1.5"/></svg>
<div class="a" style="left:62px;top:86px;width:1857px;height:737px;border-top:1.6px solid #ee4a70;border-radius:6px 0 0 0;background:#efefef"></div>
<div class="a" style="left:78px;top:95px;width:1816px;height:51px;background:#fafafa;border:1px solid #c9c9c9;border-radius:6px"></div>
<div class="a" style="left:84px;top:101px;width:188px;height:38px;background:#d3e8fc;border:1.3px solid #2f74c0;border-radius:5px"></div>
<svg class="a" style="left:139px;top:111px" width="17" height="17" viewBox="0 0 17 17" fill="#0f56a8"><rect x="6" y="0" width="5" height="17"/><rect x="0" y="6" width="17" height="5"/></svg>
<div class="a nw" style="left:168.5px;top:109.5px;font-size:16.5px;color:#1b5ba9;letter-spacing:-.3px">Widget</div>
<div class="a" style="left:1465px;top:101px;width:387px;height:38px;background:#fff;border:1px solid #c6c6c6;border-radius:5px"></div>
<div class="a nw" style="left:1475px;top:110px;font-size:18px;color:#111">Dashboard Utama</div>
<svg class="a" style="left:1827px;top:115px" width="14" height="9" viewBox="0 0 14 9" fill="none" stroke="#111" stroke-width="2"><path d="M1.5,1.5 L7,7 L12.5,1.5"/></svg>
<svg class="a" style="left:1874.5px;top:112px" width="6" height="16" viewBox="0 0 6 16" fill="#666"><circle cx="3" cy="2" r="1.8"/><circle cx="3" cy="8" r="1.8"/><circle cx="3" cy="14" r="1.8"/></svg>
<div class="card" style="left:78px;top:158px;width:596px;height:292px"><div class="ct">Aktifitas Terakhir Anda (Michelle Georgina)</div><div class="cs"></div><svg class="a" style="left:548px;top:5px" width="18" height="18" viewBox="0 0 18 18" fill="none" stroke="#111" stroke-width="2"><path d="M14.3,12.3 A7,7 0 1 1 15.2,6.3"/><path d="M9.3,6.6 H15.6 V0.6" stroke-linejoin="miter"/></svg><svg class="a" style="left:576.5px;top:6px" width="6" height="15" viewBox="0 0 6 15" fill="#707070"><circle cx="3" cy="1.8" r="1.65"/><circle cx="3" cy="7.1" r="1.65"/><circle cx="3" cy="12.4" r="1.65"/></svg><div class="a nw" style="left:22px;top:42px;font-size:13.5px;color:#555">Kemarin</div><div class="a nw" style="left:25px;top:56px;font-size:41px;color:#444;letter-spacing:-1.5px">22</div><div class="a nw" style="left:30.5px;top:98px;font-size:19.5px;color:#666">Des</div><div class="a" style="left:106px;top:63px;width:1px;height:40px;background:#ddd"></div><div class="a" style="left:101px;top:46px;width:11px;height:11px;border-radius:50%;border:1.4px solid #2c6fc4;background:#d6e8fb"></div><div class="a" style="left:101px;top:109px;width:11px;height:11px;border-radius:50%;border:1.4px solid #2c6fc4;background:#d6e8fb"></div><div class="a nw" style="left:141px;top:43px;font-size:14px;font-weight:bold;color:#222">17:06</div><div class="a nw" style="left:141px;top:73px;font-size:14.5px;color:#555;letter-spacing:.12px">Ubah Desain Cetakan Faktur Penjualan - Default</div><div class="a nw" style="left:141px;top:106px;font-size:14px;font-weight:bold;color:#222">16:05</div><div class="a" style="left:580px;top:30px;width:13px;height:100px;background:#f8f8f8"></div><svg class="a" style="left:582px;top:33px" width="10" height="9" viewBox="0 0 10 9"><path d="M5,1 L9.5,8 H0.5 Z" fill="#888"/></svg><div class="a" style="left:582px;top:47px;width:9px;height:32px;border-radius:4.5px;background:#888"></div></div>
<div class="card" style="left:685px;top:158px;width:596px;height:292px"><div class="ct"><span style="letter-spacing:.28px;margin-left:1px">Kegiatan Mendatang</span></div><div class="cs"></div><svg class="a" style="left:548px;top:5px" width="18" height="18" viewBox="0 0 18 18" fill="none" stroke="#111" stroke-width="2"><path d="M14.3,12.3 A7,7 0 1 1 15.2,6.3"/><path d="M9.3,6.6 H15.6 V0.6" stroke-linejoin="miter"/></svg><svg class="a" style="left:576.5px;top:6px" width="6" height="15" viewBox="0 0 6 15" fill="#707070"><circle cx="3" cy="1.8" r="1.65"/><circle cx="3" cy="7.1" r="1.65"/><circle cx="3" cy="12.4" r="1.65"/></svg><div class="a nw" style="left:30px;top:42px;font-size:13.5px;color:#555">Kamis</div><div class="a nw" style="left:27px;top:55px;font-size:41px;color:#444;letter-spacing:-1.5px">25</div><div class="a nw" style="left:31px;top:99px;font-size:19.5px;color:#666">Des</div><div class="a" style="left:104px;top:46px;width:11px;height:11px;border-radius:50%;border:1.2px solid #3a9a3a;background:#80e27e"></div><div class="a nw" style="left:144.5px;top:43px;font-size:14px;font-weight:bold;color:#222">110102.2025.12.00001</div><div class="a nw" style="left:144.5px;top:73px;font-size:14.5px;color:#555;letter-spacing:.2px">Jatuh Tempo Giro Masuk, Pelanggan A</div><div class="a" style="left:11px;top:132px;width:568px;height:1px;background:#e6e6e6"></div></div>
<div class="card" style="left:1293px;top:158px;width:596px;height:292px"><div class="ct"><span style="letter-spacing:-.07px;margin-left:1px">Tren Penjualan (Semua Cabang)</span></div><div class="cs"></div><svg class="a" style="left:548px;top:5px" width="18" height="18" viewBox="0 0 18 18" fill="none" stroke="#111" stroke-width="2"><path d="M14.3,12.3 A7,7 0 1 1 15.2,6.3"/><path d="M9.3,6.6 H15.6 V0.6" stroke-linejoin="miter"/></svg><svg class="a" style="left:576.5px;top:6px" width="6" height="15" viewBox="0 0 6 15" fill="#707070"><circle cx="3" cy="1.8" r="1.65"/><circle cx="3" cy="7.1" r="1.65"/><circle cx="3" cy="12.4" r="1.65"/></svg><svg class="a" style="left:0;top:0" width="594" height="290" viewBox="1294 159 594 290"><line x1="1353" y1="218.5" x2="1873" y2="218.5" stroke="#e6e6e6" stroke-width="1"/><text x="1336.5" y="224.0" text-anchor="end" font-family="Liberation Sans" font-size="12" letter-spacing=".9" fill="#666">15 jt</text><line x1="1353" y1="281" x2="1873" y2="281" stroke="#e6e6e6" stroke-width="1"/><text x="1336.5" y="286.5" text-anchor="end" font-family="Liberation Sans" font-size="12" letter-spacing=".9" fill="#666">10 jt</text><line x1="1353" y1="342" x2="1873" y2="342" stroke="#e6e6e6" stroke-width="1"/><text x="1336.5" y="347.5" text-anchor="end" font-family="Liberation Sans" font-size="12" letter-spacing=".9" fill="#666">5 jt</text><line x1="1353" y1="403.5" x2="1873" y2="403.5" stroke="#ccd6eb" stroke-width="1"/><text x="1336.5" y="409" text-anchor="end" font-family="Liberation Sans" font-size="12" letter-spacing=".9" fill="#666">0</text><text x="1390.2" y="424.5" text-anchor="middle" font-family="Liberation Sans" font-size="12" letter-spacing=".8" fill="#666">Rab</text><text x="1464.5" y="424.5" text-anchor="middle" font-family="Liberation Sans" font-size="12" letter-spacing=".8" fill="#666">Kam</text><text x="1538.7" y="424.5" text-anchor="middle" font-family="Liberation Sans" font-size="12" letter-spacing=".8" fill="#666">Jum</text><text x="1613.0" y="424.5" text-anchor="middle" font-family="Liberation Sans" font-size="12" letter-spacing=".8" fill="#666">Sab</text><text x="1687.3" y="424.5" text-anchor="middle" font-family="Liberation Sans" font-size="12" letter-spacing=".8" fill="#666">Min</text><text x="1761.5" y="424.5" text-anchor="middle" font-family="Liberation Sans" font-size="12" letter-spacing=".8" fill="#666">Kemarin</text><text x="1835.8" y="424.5" text-anchor="middle" font-family="Liberation Sans" font-size="12" letter-spacing=".8" fill="#666">Hari ini</text><text x="1873.5" y="210" text-anchor="end" font-family="Liberation Sans" font-size="11.5" letter-spacing=".55" fill="#333">(Seminggu terakhir)</text><path d="M1390.2,403.5 L1687.3,403.5 C1723.3,403.5 1729.5,237.4 1761.5,237.4 C1794.5,237.4 1819.8,368 1835.8,403.5" fill="none" stroke="#7cb5ec" stroke-width="2.2"/><circle cx="1390.2" cy="403.5" r="4.2" fill="#7cb5ec"/><circle cx="1464.5" cy="403.5" r="4.2" fill="#7cb5ec"/><circle cx="1538.7" cy="403.5" r="4.2" fill="#7cb5ec"/><circle cx="1613.0" cy="403.5" r="4.2" fill="#7cb5ec"/><circle cx="1687.3" cy="403.5" r="4.2" fill="#7cb5ec"/><circle cx="1835.8" cy="403.5" r="4.2" fill="#7cb5ec"/><circle cx="1761.5" cy="237.4" r="4.2" fill="#7cb5ec"/></svg></div>
<div class="card" style="left:78px;top:461px;width:596px;height:293px"><div class="cs"></div><svg class="a" style="left:548px;top:5px" width="18" height="18" viewBox="0 0 18 18" fill="none" stroke="#111" stroke-width="2"><path d="M14.3,12.3 A7,7 0 1 1 15.2,6.3"/><path d="M9.3,6.6 H15.6 V0.6" stroke-linejoin="miter"/></svg><svg class="a" style="left:576.5px;top:6px" width="6" height="15" viewBox="0 0 6 15" fill="#707070"><circle cx="3" cy="1.8" r="1.65"/><circle cx="3" cy="7.1" r="1.65"/><circle cx="3" cy="12.4" r="1.65"/></svg></div>
<div class="card" style="left:685px;top:461px;width:596px;height:293px"><div class="cs"></div><svg class="a" style="left:548px;top:5px" width="18" height="18" viewBox="0 0 18 18" fill="none" stroke="#111" stroke-width="2"><path d="M14.3,12.3 A7,7 0 1 1 15.2,6.3"/><path d="M9.3,6.6 H15.6 V0.6" stroke-linejoin="miter"/></svg><svg class="a" style="left:576.5px;top:6px" width="6" height="15" viewBox="0 0 6 15" fill="#707070"><circle cx="3" cy="1.8" r="1.65"/><circle cx="3" cy="7.1" r="1.65"/><circle cx="3" cy="12.4" r="1.65"/></svg><svg class="a" style="left:0;top:0" width="594" height="292" viewBox="686 462 594 292"><line x1="700" y1="505.5" x2="1266" y2="505.5" stroke="#e6e6e6" stroke-width="1"/><line x1="700" y1="574.4" x2="1266" y2="574.4" stroke="#e6e6e6" stroke-width="1"/><line x1="700" y1="639.7" x2="1266" y2="639.7" stroke="#e6e6e6" stroke-width="1"/><line x1="700" y1="708.1" x2="1266" y2="708.1" stroke="#ccd6eb" stroke-width="1"/><text x="1015.1" y="728.5" text-anchor="middle" font-family="Liberation Sans" font-size="12" letter-spacing=".8" fill="#666">20 Des</text><text x="1086.7" y="728.5" text-anchor="middle" font-family="Liberation Sans" font-size="12" letter-spacing=".8" fill="#666">21 Des</text><text x="1157.8" y="728.5" text-anchor="middle" font-family="Liberation Sans" font-size="12" letter-spacing=".8" fill="#666">22 Des</text><text x="1229.8" y="728.5" text-anchor="middle" font-family="Liberation Sans" font-size="12" letter-spacing=".8" fill="#666">23 Des</text><path d="M930,765 L996,540 C1003,516 1007,506.4 1015.1,506.4 L1229.8,506.4" fill="none" stroke="#1aa3d9" stroke-width="2.2"/><circle cx="1015.1" cy="506.4" r="4.2" fill="#1aa3d9"/><circle cx="1086.7" cy="506.4" r="4.2" fill="#1aa3d9"/><circle cx="1157.8" cy="506.4" r="4.2" fill="#1aa3d9"/><circle cx="1229.8" cy="506.4" r="4.2" fill="#1aa3d9"/></svg></div>
<div class="card" style="left:1293px;top:461px;width:596px;height:293px"><div class="ct"><span style="letter-spacing:-.1px;margin-left:1px">Beban Perusahaan (Semua Cabang)</span></div><div class="cs"></div><svg class="a" style="left:548px;top:5px" width="18" height="18" viewBox="0 0 18 18" fill="none" stroke="#111" stroke-width="2"><path d="M14.3,12.3 A7,7 0 1 1 15.2,6.3"/><path d="M9.3,6.6 H15.6 V0.6" stroke-linejoin="miter"/></svg><svg class="a" style="left:576.5px;top:6px" width="6" height="15" viewBox="0 0 6 15" fill="#707070"><circle cx="3" cy="1.8" r="1.65"/><circle cx="3" cy="7.1" r="1.65"/><circle cx="3" cy="12.4" r="1.65"/></svg><svg class="a" style="left:450px;top:43px" width="130" height="12" viewBox="0 0 130 12"><path d="M7.5,2 L3.5,6 L7.5,10" fill="none" stroke="#1aaaec" stroke-width="2"/><path d="M122,2 L126,6 L122,10" fill="none" stroke="#1aaaec" stroke-width="2"/></svg><div class="a nw" style="left:464px;top:42px;font-size:11px;color:#333;letter-spacing:-.2px">1 Des - 23 Des 2025</div><div class="a" style="left:29px;top:61px;width:101px;height:101px;border-radius:50%;border:12.5px solid #32dcb2"></div><svg class="a" style="left:58px;top:105px" width="16" height="16" viewBox="0 0 16 16" fill="none" stroke="#e8212b" stroke-width="1.6"><circle cx="8" cy="8" r="6.6"/><path d="M8,12 V5 M5,7.8 L8,4.8 L11,7.8"/></svg><div class="a nw" style="left:77px;top:99px;font-size:23px;color:#e8212b">8x</div><div class="a nw" style="left:-20.40000000000009px;top:169px;width:200px;text-align:center;font-size:11px;line-height:14.5px;color:#333">Dibanding 1 Nov - 30 Nov<br>2025</div><div class="a nw" style="left:158px;top:71px;font-size:20.5px;font-weight:bold;color:#111">Beban</div><div class="a nw" style="right:15px;top:70px;font-size:21.5px;font-weight:bold;color:#111;text-align:right"><span style="font-size:15px">Rp </span>900.000</div><div class="a" style="left:158px;top:101px;width:421px;height:1px;background:#d8d8d8"></div><div class="a" style="left:158.5px;top:112.70000000000005px;width:11px;height:11px;border-radius:50%;background:#3cc8a0;border:1px solid rgba(0,0,0,.25)"></div><div class="a nw" style="left:175.5px;top:109.70000000000005px;font-size:14px;color:#222">Beban Iklan</div><div class="a nw" style="right:66px;top:110.20000000000005px;font-size:14px;font-weight:bold;color:#222;text-align:right"><span style="font-size:9.5px;color:#888">Rp</span>&nbsp; 1.000.000</div><div class="a" style="left:532.4000000000001px;top:109.60000000000002px;width:47px;height:17px;border-radius:8.5px;background:#fdd5d5;border:1px solid #f08a8a;font-size:11px;line-height:15px;text-align:center;color:#e02a2a">90%</div><div class="a" style="left:158.5px;top:140.79999999999995px;width:11px;height:11px;border-radius:50%;background:#f8c030;border:1px solid rgba(0,0,0,.25)"></div><div class="a nw" style="left:175.5px;top:137.79999999999995px;font-size:14px;color:#222">Beban Angkut Pembelian</div><div class="a nw" style="right:66px;top:138.29999999999995px;font-size:14px;font-weight:bold;color:#222;text-align:right"><span style="font-size:9.5px;color:#888">Rp</span>&nbsp; -100.000</div><div class="a" style="left:532.4000000000001px;top:137.69999999999993px;width:47px;height:17px;border-radius:8.5px;background:#fdd5d5;border:1px solid #f08a8a;font-size:11px;line-height:15px;text-align:center;color:#e02a2a">100%</div></div>
<div class="card" style="left:78px;top:765px;width:900px;height:65px"><div class="cs"></div><svg class="a" style="left:852px;top:5px" width="18" height="18" viewBox="0 0 18 18" fill="none" stroke="#111" stroke-width="2"><path d="M14.3,12.3 A7,7 0 1 1 15.2,6.3"/><path d="M9.3,6.6 H15.6 V0.6" stroke-linejoin="miter"/></svg><svg class="a" style="left:880.5px;top:6px" width="6" height="15" viewBox="0 0 6 15" fill="#707070"><circle cx="3" cy="1.8" r="1.65"/><circle cx="3" cy="7.1" r="1.65"/><circle cx="3" cy="12.4" r="1.65"/></svg></div>
<div class="card" style="left:989px;top:765px;width:900px;height:65px"><div class="ct">Pembelian (Semua Cabang)</div><div class="cs"></div><svg class="a" style="left:852px;top:5px" width="18" height="18" viewBox="0 0 18 18" fill="none" stroke="#111" stroke-width="2"><path d="M14.3,12.3 A7,7 0 1 1 15.2,6.3"/><path d="M9.3,6.6 H15.6 V0.6" stroke-linejoin="miter"/></svg><svg class="a" style="left:880.5px;top:6px" width="6" height="15" viewBox="0 0 6 15" fill="#707070"><circle cx="3" cy="1.8" r="1.65"/><circle cx="3" cy="7.1" r="1.65"/><circle cx="3" cy="12.4" r="1.65"/></svg><svg class="a" style="left:310px;top:43px" width="130" height="12" viewBox="0 0 130 12"><path d="M7.5,2 L3.5,6 L7.5,10" fill="none" stroke="#1aaaec" stroke-width="2"/><path d="M121,2 L125,6 L121,10" fill="none" stroke="#1aaaec" stroke-width="2"/></svg><div class="a nw" style="left:323px;top:42px;font-size:11px;color:#333;letter-spacing:-.2px">1 Des - 23 Des 2025</div><div class="a nw" style="right:14px;top:42px;font-size:11px;color:#333">Hari ini</div></div>
<div class="a" style="left:1906px;top:87px;width:6px;height:732px;background:#f6f6f6"></div>
<div class="a" style="left:1906px;top:87px;width:6px;height:556px;background:#ebebeb"></div>
<div class="a" style="left:62px;top:819px;width:1857px;height:4px;background:#ececec"></div>
<div id="side" class="a"></div>
<div class="a" style="left:-2px;top:435px;width:66.5px;height:59px;background:#ed1c24"></div>
<div class="a" style="left:3px;top:440px;width:55px;height:49px;background:#5a5a5a"></div>
<svg class="a" style="left:15px;top:85.0px" width="32" height="32" viewBox="0 0 32 32" overflow="visible"><path d="M16.20,2.20 L16.55,2.21 L16.91,2.23 L17.26,2.27 L17.60,2.33 L17.95,2.43 L18.28,2.59 L18.58,2.84 L18.85,3.23 L19.06,3.79 L19.20,4.50 L19.31,5.20 L19.43,5.76 L19.58,6.16 L19.76,6.43 L19.96,6.63 L20.17,6.78 L20.39,6.92 L20.61,7.05 L20.83,7.17 L21.05,7.30 L21.27,7.43 L21.49,7.56 L21.71,7.68 L21.94,7.80 L22.18,7.91 L22.45,7.99 L22.77,8.01 L23.19,7.94 L23.74,7.75 L24.40,7.50 L25.08,7.27 L25.68,7.17 L26.15,7.20 L26.52,7.35 L26.82,7.55 L27.07,7.80 L27.30,8.07 L27.51,8.35 L27.71,8.65 L27.89,8.95 L28.06,9.26 L28.22,9.58 L28.36,9.90 L28.48,10.23 L28.56,10.58 L28.59,10.94 L28.53,11.33 L28.33,11.76 L27.94,12.22 L27.40,12.70 L26.85,13.14 L26.42,13.53 L26.15,13.86 L26.00,14.15 L25.93,14.42 L25.91,14.68 L25.90,14.94 L25.90,15.19 L25.90,15.45 L25.90,15.70 L25.90,15.95 L25.90,16.21 L25.90,16.46 L25.91,16.72 L25.93,16.98 L26.00,17.25 L26.15,17.54 L26.42,17.87 L26.85,18.26 L27.40,18.70 L27.94,19.18 L28.33,19.64 L28.53,20.07 L28.59,20.46 L28.56,20.82 L28.48,21.17 L28.36,21.50 L28.22,21.82 L28.06,22.14 L27.89,22.45 L27.71,22.75 L27.51,23.05 L27.30,23.33 L27.07,23.60 L26.82,23.85 L26.52,24.05 L26.15,24.20 L25.68,24.23 L25.08,24.13 L24.40,23.90 L23.74,23.65 L23.19,23.46 L22.77,23.39 L22.45,23.41 L22.18,23.49 L21.94,23.60 L21.71,23.72 L21.49,23.84 L21.27,23.97 L21.05,24.10 L20.83,24.23 L20.61,24.35 L20.39,24.48 L20.17,24.62 L19.96,24.77 L19.76,24.97 L19.58,25.24 L19.43,25.64 L19.31,26.20 L19.20,26.90 L19.06,27.61 L18.85,28.17 L18.58,28.56 L18.28,28.81 L17.95,28.97 L17.60,29.07 L17.26,29.13 L16.91,29.17 L16.55,29.19 L16.20,29.20 L15.85,29.19 L15.49,29.17 L15.14,29.13 L14.80,29.07 L14.45,28.97 L14.12,28.81 L13.82,28.56 L13.55,28.17 L13.34,27.61 L13.20,26.90 L13.09,26.20 L12.97,25.64 L12.82,25.24 L12.64,24.97 L12.44,24.77 L12.23,24.62 L12.01,24.48 L11.79,24.35 L11.57,24.23 L11.35,24.10 L11.13,23.97 L10.91,23.84 L10.69,23.72 L10.46,23.60 L10.22,23.49 L9.95,23.41 L9.63,23.39 L9.21,23.46 L8.66,23.65 L8.00,23.90 L7.32,24.13 L6.72,24.23 L6.25,24.20 L5.88,24.05 L5.58,23.85 L5.33,23.60 L5.10,23.33 L4.89,23.05 L4.69,22.75 L4.51,22.45 L4.34,22.14 L4.18,21.82 L4.04,21.50 L3.92,21.17 L3.84,20.82 L3.81,20.46 L3.87,20.07 L4.07,19.64 L4.46,19.18 L5.00,18.70 L5.55,18.26 L5.98,17.87 L6.25,17.54 L6.40,17.25 L6.47,16.98 L6.49,16.72 L6.50,16.46 L6.50,16.21 L6.50,15.95 L6.50,15.70 L6.50,15.45 L6.50,15.19 L6.50,14.94 L6.49,14.68 L6.47,14.42 L6.40,14.15 L6.25,13.86 L5.98,13.53 L5.55,13.14 L5.00,12.70 L4.46,12.22 L4.07,11.76 L3.87,11.33 L3.81,10.94 L3.84,10.58 L3.92,10.23 L4.04,9.90 L4.18,9.58 L4.34,9.26 L4.51,8.95 L4.69,8.65 L4.89,8.35 L5.10,8.07 L5.33,7.80 L5.58,7.55 L5.88,7.35 L6.25,7.20 L6.72,7.17 L7.32,7.27 L8.00,7.50 L8.66,7.75 L9.21,7.94 L9.63,8.01 L9.95,7.99 L10.22,7.91 L10.46,7.80 L10.69,7.68 L10.91,7.56 L11.13,7.43 L11.35,7.30 L11.57,7.17 L11.79,7.05 L12.01,6.92 L12.23,6.78 L12.44,6.63 L12.64,6.43 L12.82,6.16 L12.97,5.76 L13.09,5.20 L13.20,4.50 L13.34,3.79 L13.55,3.23 L13.82,2.84 L14.12,2.59 L14.45,2.43 L14.80,2.33 L15.14,2.27 L15.49,2.23 L15.85,2.21 L16.20,2.20Z" fill="none" stroke="#fff" stroke-width="2" stroke-linejoin="round" stroke-linecap="round"/><circle cx="16.2" cy="15.7" r="3.4" fill="none" stroke="#fff" stroke-width="2.5"/></svg>
<svg class="a" style="left:15px;top:136.5px" width="32" height="32" viewBox="0 0 32 32" overflow="visible"><rect x="11.5" y="3" width="9" height="9" fill="none" stroke="#fff" stroke-width="2" stroke-linejoin="round" stroke-linecap="round"/><path d="M7,20 L9,12 L23,12 L25,20" fill="none" stroke="#fff" stroke-width="2" stroke-linejoin="round" stroke-linecap="round"/>
<rect x="3" y="20" width="26" height="9" fill="none" stroke="#fff" stroke-width="2" stroke-linejoin="round" stroke-linecap="round"/><path d="M12,20 v4 h8 v-4" fill="none" stroke="#fff" stroke-width="2" stroke-linejoin="round" stroke-linecap="round"/>
<g fill="#fff"><rect x="12" y="14" width="2" height="2"/><rect x="15" y="14" width="2" height="2"/><rect x="18" y="14" width="2" height="2"/><rect x="12" y="17" width="2" height="2"/><rect x="15" y="17" width="2" height="2"/><rect x="18" y="17" width="2" height="2"/></g></svg>
<svg class="a" style="left:15px;top:188.0px" width="32" height="32" viewBox="0 0 32 32" overflow="visible"><path d="M5,30 L5,8 L19,2 L19,30" fill="none" stroke="#fff" stroke-width="2" stroke-linejoin="round" stroke-linecap="round"/><path d="M19,12 L27,12 L27,30" fill="none" stroke="#fff" stroke-width="2" stroke-linejoin="round" stroke-linecap="round"/><path d="M2,30 L30,30" fill="none" stroke="#fff" stroke-width="2" stroke-linejoin="round" stroke-linecap="round"/>
<path d="M9,13 h6 M9,17.5 h6 M9,22 h6 M9,26 h6 M22,16 h2 M22,20 h2 M22,24 h2" fill="none" stroke="#fff" stroke-width="2" stroke-linejoin="round" stroke-linecap="round"/></svg>
<svg class="a" style="left:15px;top:239.5px" width="32" height="32" viewBox="0 0 32 32" overflow="visible"><path d="M6,25 L6,5 Q6,2 9,2 L27,2 L27,29 L9,29 Q6,29 6,26 Q6,23 9,23 L27,23" fill="none" stroke="#fff" stroke-width="2" stroke-linejoin="round" stroke-linecap="round"/><rect x="12" y="7" width="9" height="4" fill="none" stroke="#fff" stroke-width="2" stroke-linejoin="round" stroke-linecap="round"/><path d="M12,26 h10" fill="none" stroke="#fff" stroke-width="2" stroke-linejoin="round" stroke-linecap="round"/></svg>
<svg class="a" style="left:15px;top:291.7px" width="32" height="32" viewBox="0 0 32 32" overflow="visible"><path d="M2,11 L16,2 L30,11 Z" fill="none" stroke="#fff" stroke-width="2" stroke-linejoin="round" stroke-linecap="round"/><circle cx="16" cy="7" r="1.6" fill="#fff" stroke="none"/>
<path d="M6,13 v11 M11,13 v11 M21,13 v3" fill="none" stroke="#fff" stroke-width="2" stroke-linejoin="round" stroke-linecap="round"/><path d="M2,28 h10" fill="none" stroke="#fff" stroke-width="2" stroke-linejoin="round" stroke-linecap="round"/>
<rect x="14" y="16" width="15" height="9" rx="1.5" fill="none" stroke="#fff" stroke-width="2" stroke-linejoin="round" stroke-linecap="round"/><rect x="11" y="19" width="16" height="11" rx="1.5" fill="#2a3c6c" stroke="#fff" stroke-width="2"/><path d="M15,26 h6" fill="none" stroke="#fff" stroke-width="2" stroke-linejoin="round" stroke-linecap="round"/></svg>
<svg class="a" style="left:15px;top:343.3px" width="32" height="32" viewBox="0 0 32 32" overflow="visible"><path d="M11,6 L7,28 L16,31" fill="none" stroke="#fff" stroke-width="2" stroke-linejoin="round" stroke-linecap="round"/><path d="M11,6 L20,4 L27,10 L27,30 L13,31 Z" fill="none" stroke="#fff" stroke-width="2" stroke-linejoin="round" stroke-linecap="round"/><circle cx="20" cy="9" r="1.8" fill="none" stroke="#fff" stroke-width="2" stroke-linejoin="round" stroke-linecap="round"/><path d="M20,7 Q22,2 24,3" fill="none" stroke="#fff" stroke-width="2" stroke-linejoin="round" stroke-linecap="round"/>
<text x="20" y="24" text-anchor="middle" font-family="Liberation Sans" font-weight="bold" font-size="8.5" fill="#fff">Rp</text></svg>
<svg class="a" style="left:15px;top:395.0px" width="32" height="32" viewBox="0 0 32 32" overflow="visible"><path d="M1,2 L5,2 Q7,2 7.5,5 L10,22 L27,22" fill="none" stroke="#fff" stroke-width="2" stroke-linejoin="round" stroke-linecap="round"/><path d="M7,6 L30,6 L28,18 L9,18" fill="none" stroke="#fff" stroke-width="2" stroke-linejoin="round" stroke-linecap="round"/><path d="M14,6 v12 M21.5,6 v12 M8,12 h21" fill="none" stroke="#fff" stroke-width="2" stroke-linejoin="round" stroke-linecap="round"/><circle cx="12" cy="27" r="2.5" fill="none" stroke="#fff" stroke-width="2" stroke-linejoin="round" stroke-linecap="round"/><circle cx="25" cy="27" r="2.5" fill="none" stroke="#fff" stroke-width="2" stroke-linejoin="round" stroke-linecap="round"/></svg>
<svg class="a" style="left:15px;top:446.7px" width="32" height="32" viewBox="0 0 32 32" overflow="visible"><path d="M2,2 L6,2 Q8,2 8,5 L8,25" fill="none" stroke="#fff" stroke-width="2" stroke-linejoin="round" stroke-linecap="round"/><rect x="8" y="22" width="22" height="3.5" fill="none" stroke="#fff" stroke-width="2" stroke-linejoin="round" stroke-linecap="round"/><circle cx="13" cy="29" r="2.3" fill="none" stroke="#fff" stroke-width="2" stroke-linejoin="round" stroke-linecap="round"/><circle cx="25" cy="29" r="2.3" fill="none" stroke="#fff" stroke-width="2" stroke-linejoin="round" stroke-linecap="round"/>
<rect x="12" y="12" width="15" height="10" fill="none" stroke="#fff" stroke-width="2" stroke-linejoin="round" stroke-linecap="round"/><rect x="15" y="3" width="10" height="9" fill="none" stroke="#fff" stroke-width="2" stroke-linejoin="round" stroke-linecap="round"/><path d="M18.5,3 v3 h3 v-3 M18.5,12 v3 h3 v-3" fill="none" stroke="#fff" stroke-width="2" stroke-linejoin="round" stroke-linecap="round"/></svg>
<svg class="a" style="left:15px;top:499.5px" width="32" height="32" viewBox="0 0 32 32" overflow="visible"><path d="M4,28 L4,14 Q4,9 9,9 L14,9 L14,18" fill="none" stroke="#fff" stroke-width="2" stroke-linejoin="round" stroke-linecap="round"/><path d="M18,14 L18,2 L28,2 L28,28" fill="none" stroke="#fff" stroke-width="2" stroke-linejoin="round" stroke-linecap="round"/><path d="M1,28.5 h30" fill="none" stroke="#fff" stroke-width="2" stroke-linejoin="round" stroke-linecap="round"/>
<path d="M7,14 h4 M7,18 h3 M21,6 h4 M21,10 h4 M21,14 h4" fill="none" stroke="#fff" stroke-width="2" stroke-linejoin="round" stroke-linecap="round"/><path d="M9,26 L9,22 L12,18 L20,18 L23,22 L23,26 Z" fill="none" stroke="#fff" stroke-width="2" stroke-linejoin="round" stroke-linecap="round"/><circle cx="12.5" cy="26" r="1.6" fill="none" stroke="#fff" stroke-width="2" stroke-linejoin="round" stroke-linecap="round"/><circle cx="19.5" cy="26" r="1.6" fill="none" stroke="#fff" stroke-width="2" stroke-linejoin="round" stroke-linecap="round"/></svg>
<svg class="a" style="left:15px;top:551.3px" width="32" height="32" viewBox="0 0 32 32" overflow="visible"><path d="M13,29 L5,29 Q2,29 2,26 L2,5 Q2,2 5,2 L18,2 Q21,2 21,5 L21,14" fill="none" stroke="#fff" stroke-width="2" stroke-linejoin="round" stroke-linecap="round"/><text x="11.5" y="10.5" text-anchor="middle" font-family="Liberation Sans" font-weight="bold" font-size="8" fill="#fff">TAX</text>
<path d="M5,15 h10 M5,20 h8 M5,25 h8" fill="none" stroke="#fff" stroke-width="2" stroke-linejoin="round" stroke-linecap="round"/><rect x="15" y="14" width="15" height="16" rx="2.5" fill="none" stroke="#fff" stroke-width="2" stroke-linejoin="round" stroke-linecap="round"/><path d="M18,18.5 h9" fill="none" stroke="#fff" stroke-width="2" stroke-linejoin="round" stroke-linecap="round"/>
<g fill="#fff"><rect x="18" y="22" width="3" height="2"/><rect x="23" y="22" width="3" height="2"/><rect x="18" y="25.5" width="3" height="2"/><rect x="23" y="25.5" width="3" height="2"/></g></svg>
<svg class="a" style="left:15px;top:603.3px" width="32" height="32" viewBox="0 0 32 32" overflow="visible"><path d="M9,2 L25,2 Q28,2 28,5 L28,27 Q28,30 25,30 L7,30 Q4,30 4,27 L4,8 Z" fill="none" stroke="#fff" stroke-width="2" stroke-linejoin="round" stroke-linecap="round"/><path d="M15,11 A7,7 0 1 0 22,18 L15,18 Z" fill="none" stroke="#fff" stroke-width="2" stroke-linejoin="round" stroke-linecap="round"/><path d="M18,8 A7,7 0 0 1 25,15 L18,15 Z" fill="none" stroke="#fff" stroke-width="2" stroke-linejoin="round" stroke-linecap="round"/><path d="M9,26 h14" fill="none" stroke="#fff" stroke-width="2" stroke-linejoin="round" stroke-linecap="round"/></svg>
<div class="a" style="left:62px;top:278px;width:903px;height:560px;background:#fafafa;border-radius:5px 5px 0 0;box-shadow:3px 0 24px rgba(0,0,0,.45)"></div>
<div class="a nw" style="left:74px;top:302px;font-size:27px;color:#555;letter-spacing:-1.7px">Persediaan</div>
<div class="a" style="left:74px;top:350px;width:878px;height:2px;background:#e73a62"></div>
<div class="tile g" style="left:74.0px;top:375.1px"><svg style="left:45.0px;top:24.3px" width="48" height="48" viewBox="0 0 48 48"><path d="M5.2,1.2 H31.5 L42.4,11.5 V41 Q42.4,45 38.4,45 H5.2 Q1.2,45 1.2,41 V5.2 Q1.2,1.2 5.2,1.2 Z" fill="none" stroke="#5b9505" stroke-width="2.4" stroke-linecap="round" stroke-linejoin="round"/>
<path d="M31.5,1.8 V8 Q31.5,11 34.5,11 H42" fill="none" stroke="#5b9505" stroke-width="2.4" stroke-linecap="round" stroke-linejoin="round"/><rect x="6.50" y="5.80" width="17.90" height="18.40" rx="4.5" fill="none" stroke="#5b9505" stroke-width="2.4" stroke-linecap="round" stroke-linejoin="round"/><path d="M12.23,5.80 V13.90 H18.67 V5.80" fill="none" stroke="#5b9505" stroke-width="2.4" stroke-linecap="round" stroke-linejoin="round"/><path d="M11.51,19.42 H15.45" fill="none" stroke="#5b9505" stroke-width="2.4" stroke-linecap="round" stroke-linejoin="round"/><path d="M6,31.4 H37 M6,38.3 H37" fill="none" stroke="#5b9505" stroke-width="2.4" stroke-linecap="round" stroke-linejoin="round"/></svg><div class="l">Permintaan<br>Barang</div></div>
<div class="tile g" style="left:220.4px;top:375.1px"><svg style="left:43.3px;top:26.2px" width="48" height="48" viewBox="0 0 48 48"><path d="M2.5,28 V19 Q2.5,17.5 4,17.5 H25 V28.5" fill="none" stroke="#5b9505" stroke-width="2.4" stroke-linecap="round" stroke-linejoin="round"/>
<path d="M4.3,17.5 V3.5 Q4.3,1.3 6.5,1.3 H13 Q16,1.3 17.5,3.5 L24.5,17.5" fill="none" stroke="#5b9505" stroke-width="2.4" stroke-linecap="round" stroke-linejoin="round"/>
<path d="M8.3,9.5 V17 M14.5,12.5 L18,16 M12.5,16.5 L16,12.5" fill="none" stroke="#5b9505" stroke-width="2" stroke-linecap="round" stroke-linejoin="round"/>
<path d="M26.2,1.2 V29" fill="none" stroke="#5b9505" stroke-width="2.2" stroke-linecap="round" stroke-linejoin="round"/>
<circle cx="8.3" cy="30.5" r="3" fill="none" stroke="#5b9505" stroke-width="2.4" stroke-linecap="round" stroke-linejoin="round"/><circle cx="23" cy="30.5" r="3" fill="none" stroke="#5b9505" stroke-width="2.4" stroke-linecap="round" stroke-linejoin="round"/><path d="M11.3,30.5 H20" fill="none" stroke="#5b9505" stroke-width="2.4" stroke-linecap="round" stroke-linejoin="round"/><path d="M26,31 H33" fill="none" stroke="#5b9505" stroke-width="2" stroke-linecap="round" stroke-linejoin="round"/>
<rect x="28.70" y="9.20" width="16.40" height="18.40" rx="4.5" fill="none" stroke="#5b9505" stroke-width="2.4" stroke-linecap="round" stroke-linejoin="round"/><path d="M33.65,9.20 V17.30 H40.15 V9.20" fill="none" stroke="#5b9505" stroke-width="2.4" stroke-linecap="round" stroke-linejoin="round"/><path d="M33.29,22.82 H36.90" fill="none" stroke="#5b9505" stroke-width="2.4" stroke-linecap="round" stroke-linejoin="round"/><path d="M5.5,38.5 H41 M0.8,43.4 H45.5" fill="none" stroke="#5b9505" stroke-width="2.4" stroke-linecap="round" stroke-linejoin="round"/></svg><div class="l">Pemindahan<br>Barang</div></div>
<div class="tile g" style="left:366.8px;top:375.1px"><svg style="left:44.0px;top:24.6px" width="48" height="48" viewBox="0 0 48 48"><path d="M10.2,36 V6.2 Q10.2,1.2 15.2,1.2 H40 Q45,1.2 45,6.2 V40 Q45,45 40,45 H7 Q1.2,45 1.2,39 V32.5 Q1.2,26.5 7,26.5 H10.2" fill="none" stroke="#5b9505" stroke-width="2.4" stroke-linecap="round" stroke-linejoin="round"/>
<path d="M10.2,26.5 V45" fill="none" stroke="#5b9505" stroke-width="2.4" stroke-linecap="round" stroke-linejoin="round"/><rect x="18.00" y="6.70" width="18.20" height="18.90" rx="4.5" fill="none" stroke="#5b9505" stroke-width="2.4" stroke-linecap="round" stroke-linejoin="round"/><path d="M23.82,6.70 V15.02 H30.38 V6.70" fill="none" stroke="#5b9505" stroke-width="2.4" stroke-linecap="round" stroke-linejoin="round"/><path d="M23.10,20.69 H27.10" fill="none" stroke="#5b9505" stroke-width="2.4" stroke-linecap="round" stroke-linejoin="round"/><path d="M17.2,32.8 H36.9 M14.2,39.2 H39.8" fill="none" stroke="#5b9505" stroke-width="2.4" stroke-linecap="round" stroke-linejoin="round"/></svg><div class="l">Penyesuaian<br>Persediaan</div></div>
<div class="tile g" style="left:513.1px;top:375.1px"><svg style="left:43.4px;top:24.6px" width="48" height="48" viewBox="0 0 48 48"><path d="M24.5,46 H5.5 Q1.2,46 1.2,41.5 V12.5 Q1.2,8.2 5.5,8.2 H10.5 M29,8.2 H32.5 Q37,8.2 37,12.5 V23" fill="none" stroke="#5b9505" stroke-width="2.4" stroke-linecap="round" stroke-linejoin="round"/>
<path d="M13.5,6.5 Q15,2.5 19.7,2.2 Q24.5,2.5 26,6.5" fill="none" stroke="#5b9505" stroke-width="2.4" stroke-linecap="round" stroke-linejoin="round"/><rect x="11.3" y="7.5" width="17" height="4.6" rx="2.3" fill="none" stroke="#5b9505" stroke-width="2.4" stroke-linecap="round" stroke-linejoin="round"/>
<path d="M5.5,38.5 H23" fill="none" stroke="#5b9505" stroke-width="2.4" stroke-linecap="round" stroke-linejoin="round"/><path d="M17.20,23.22 L18.35,23.34 L18.35,24.66 L17.20,24.78 L16.87,25.57 L17.60,26.47 L16.67,27.40 L15.77,26.67 L14.98,27.00 L14.86,28.15 L13.54,28.15 L13.42,27.00 L12.63,26.67 L11.73,27.40 L10.80,26.47 L11.53,25.57 L11.20,24.78 L10.05,24.66 L10.05,23.34 L11.20,23.22 L11.53,22.43 L10.80,21.53 L11.73,20.60 L12.63,21.33 L13.42,21.00 L13.54,19.85 L14.86,19.85 L14.98,21.00 L15.77,21.33 L16.67,20.60 L17.60,21.53 L16.87,22.43Z" fill="none" stroke="#5b9505" stroke-width="1.5" stroke-linecap="round" stroke-linejoin="round"/><circle cx="14.2" cy="24" r="1.3" fill="none" stroke="#5b9505" stroke-width="1.2" stroke-linecap="round" stroke-linejoin="round"/>
<path d="M6.5,22 A8.5,8.5 0 0 1 22.3,20.5" fill="none" stroke="#5b9505" stroke-width="1.8" stroke-linecap="round" stroke-linejoin="round"/><path d="M22,27 A8.5,8.5 0 0 1 6,27.5" fill="none" stroke="#5b9505" stroke-width="1.8" stroke-linecap="round" stroke-linejoin="round"/><path d="M20,19.5 L22.8,21 L23.5,17.8 M8.5,28.5 L5.7,27 L5,30.2" fill="none" stroke="#5b9505" stroke-width="1.6" stroke-linecap="round" stroke-linejoin="round"/><rect x="27.50" y="26.60" width="17.30" height="18.20" rx="4.5" fill="none" stroke="#5b9505" stroke-width="2.4" stroke-linecap="round" stroke-linejoin="round"/><path d="M32.75,26.60 V34.61 H39.55 V26.60" fill="none" stroke="#5b9505" stroke-width="2.4" stroke-linecap="round" stroke-linejoin="round"/><path d="M32.34,40.07 H36.15" fill="none" stroke="#5b9505" stroke-width="2.4" stroke-linecap="round" stroke-linejoin="round"/></svg><div class="l">Pekerjaan<br>Pesanan</div></div>
<div class="tile g" style="left:659.5px;top:375.1px"><svg style="left:43.6px;top:24.8px" width="48" height="48" viewBox="0 0 48 48"><rect x="14.00" y="1.20" width="20.60" height="19.30" rx="4.5" fill="none" stroke="#5b9505" stroke-width="2.4" stroke-linecap="round" stroke-linejoin="round"/><path d="M20.55,1.20 V9.69 H28.05 V1.20" fill="none" stroke="#5b9505" stroke-width="2.4" stroke-linecap="round" stroke-linejoin="round"/><path d="M19.77,15.48 H24.30" fill="none" stroke="#5b9505" stroke-width="2.4" stroke-linecap="round" stroke-linejoin="round"/><rect x="1.20" y="23.40" width="20.20" height="21.10" rx="4.5" fill="none" stroke="#5b9505" stroke-width="2.4" stroke-linecap="round" stroke-linejoin="round"/><path d="M7.55,23.40 V32.68 H15.05 V23.40" fill="none" stroke="#5b9505" stroke-width="2.4" stroke-linecap="round" stroke-linejoin="round"/><path d="M6.86,39.01 H11.30" fill="none" stroke="#5b9505" stroke-width="2.4" stroke-linecap="round" stroke-linejoin="round"/><circle cx="34.1" cy="33.7" r="10.5" fill="#dbfbd5" stroke="#5b9505" stroke-width="2.4" stroke-linecap="round" stroke-linejoin="round"/><path d="M34.1,27.5 V40 M27.9,33.7 H40.3" fill="none" stroke="#5b9505" stroke-width="2.4" stroke-linecap="round" stroke-linejoin="round"/></svg><div class="l">Penambahan<br>Bahan Baku</div></div>
<div class="tile g" style="left:805.9px;top:375.1px"><svg style="left:43.0px;top:24.6px" width="48" height="48" viewBox="0 0 48 48"><path d="M24.5,46 H5.5 Q1.2,46 1.2,41.5 V12.5 Q1.2,8.2 5.5,8.2 H10.5 M29,8.2 H32.5 Q37,8.2 37,12.5 V23" fill="none" stroke="#5b9505" stroke-width="2.4" stroke-linecap="round" stroke-linejoin="round"/>
<path d="M13.5,6.5 Q15,2.5 19.7,2.2 Q24.5,2.5 26,6.5" fill="none" stroke="#5b9505" stroke-width="2.4" stroke-linecap="round" stroke-linejoin="round"/><rect x="11.3" y="7.5" width="17" height="4.6" rx="2.3" fill="none" stroke="#5b9505" stroke-width="2.4" stroke-linecap="round" stroke-linejoin="round"/>
<path d="M5.5,38.5 H23" fill="none" stroke="#5b9505" stroke-width="2.4" stroke-linecap="round" stroke-linejoin="round"/><circle cx="13.7" cy="24.4" r="8.2" fill="none" stroke="#5b9505" stroke-width="2.4" stroke-linecap="round" stroke-linejoin="round"/><path d="M9.5,24.5 L12.5,27.5 L18,21.5" fill="none" stroke="#5b9505" stroke-width="2.4" stroke-linecap="round" stroke-linejoin="round"/><rect x="27.50" y="26.60" width="17.30" height="18.20" rx="4.5" fill="none" stroke="#5b9505" stroke-width="2.4" stroke-linecap="round" stroke-linejoin="round"/><path d="M32.75,26.60 V34.61 H39.55 V26.60" fill="none" stroke="#5b9505" stroke-width="2.4" stroke-linecap="round" stroke-linejoin="round"/><path d="M32.34,40.07 H36.15" fill="none" stroke="#5b9505" stroke-width="2.4" stroke-linecap="round" stroke-linejoin="round"/></svg><div class="l">Penyelesaian<br>Pesanan</div></div>
<div class="tile g" style="left:74.0px;top:521.1px"><svg style="left:44.0px;top:24.4px" width="48" height="48" viewBox="0 0 48 48"><path d="M15.6,44.8 H6.2 Q1.2,44.8 1.2,39.8 V6.2 Q1.2,1.2 6.2,1.2 H32.8 Q37.8,1.2 37.8,6.2 V15.3" fill="none" stroke="#5b9505" stroke-width="2.4" stroke-linecap="round" stroke-linejoin="round"/><rect x="7.00" y="6.70" width="18.70" height="18.90" rx="4.5" fill="none" stroke="#5b9505" stroke-width="2.4" stroke-linecap="round" stroke-linejoin="round"/><path d="M12.98,6.70 V15.02 H19.72 V6.70" fill="none" stroke="#5b9505" stroke-width="2.4" stroke-linecap="round" stroke-linejoin="round"/><path d="M12.24,20.69 H16.35" fill="none" stroke="#5b9505" stroke-width="2.4" stroke-linecap="round" stroke-linejoin="round"/><path d="M6.5,32.3 H19" fill="none" stroke="#5b9505" stroke-width="2.4" stroke-linecap="round" stroke-linejoin="round"/><path d="M19.5,37.5 L38.5,18.5 Q41.5,16 44.5,19 Q47,22 44.5,25 L25.5,44 Q24.5,45 23,45 H20.5 Q19.2,45 19.2,43.7 V39 Q19.2,38 19.5,37.5 Z" fill="none" stroke="#5b9505" stroke-width="2.4" stroke-linecap="round" stroke-linejoin="round"/><path d="M35.5,21.5 L41.5,27.5" fill="none" stroke="#5b9505" stroke-width="2.4" stroke-linecap="round" stroke-linejoin="round"/></svg><div class="l">Perintah Stok<br>Opname</div></div>
<div class="tile g" style="left:220.4px;top:521.1px"><svg style="left:43.3px;top:24.4px" width="48" height="48" viewBox="0 0 48 48"><path d="M22.4,44.8 H6.2 Q1.2,44.8 1.2,39.8 V6.2 Q1.2,1.2 6.2,1.2 H32.1 Q37.1,1.2 37.1,6.2 V20.2" fill="none" stroke="#5b9505" stroke-width="2.4" stroke-linecap="round" stroke-linejoin="round"/><rect x="7.00" y="6.70" width="18.70" height="18.90" rx="4.5" fill="none" stroke="#5b9505" stroke-width="2.4" stroke-linecap="round" stroke-linejoin="round"/><path d="M12.98,6.70 V15.02 H19.72 V6.70" fill="none" stroke="#5b9505" stroke-width="2.4" stroke-linecap="round" stroke-linejoin="round"/><path d="M12.24,20.69 H16.35" fill="none" stroke="#5b9505" stroke-width="2.4" stroke-linecap="round" stroke-linejoin="round"/><path d="M6.5,32.3 H19" fill="none" stroke="#5b9505" stroke-width="2.4" stroke-linecap="round" stroke-linejoin="round"/><circle cx="34.7" cy="35" r="10" fill="none" stroke="#5b9505" stroke-width="2.4" stroke-linecap="round" stroke-linejoin="round"/><path d="M30,35.3 L33.2,38.3 L39.5,32" fill="none" stroke="#5b9505" stroke-width="2.4" stroke-linecap="round" stroke-linejoin="round"/></svg><div class="l">Hasil Stok<br>Opname</div></div>
<div class="tile b" style="left:366.8px;top:521.1px"><svg style="left:44.0px;top:24.4px" width="48" height="48" viewBox="0 0 48 48"><rect x="1.20" y="19.60" width="24.60" height="25.20" rx="4.5" fill="none" stroke="#0d67a6" stroke-width="2.4" stroke-linecap="round" stroke-linejoin="round"/><path d="M9.25,19.60 V30.69 H17.75 V19.60" fill="none" stroke="#0d67a6" stroke-width="2.4" stroke-linecap="round" stroke-linejoin="round"/><path d="M8.09,38.25 H13.50" fill="none" stroke="#0d67a6" stroke-width="2.4" stroke-linecap="round" stroke-linejoin="round"/><path d="M38.49,12.38 L40.79,12.65 L40.79,15.35 L38.49,15.62 L37.82,17.24 L39.26,19.05 L37.35,20.96 L35.54,19.52 L33.92,20.19 L33.65,22.49 L30.95,22.49 L30.68,20.19 L29.06,19.52 L27.25,20.96 L25.34,19.05 L26.78,17.24 L26.11,15.62 L23.81,15.35 L23.81,12.65 L26.11,12.38 L26.78,10.76 L25.34,8.95 L27.25,7.04 L29.06,8.48 L30.68,7.81 L30.95,5.51 L33.65,5.51 L33.92,7.81 L35.54,8.48 L37.35,7.04 L39.26,8.95 L37.82,10.76Z" fill="none" stroke="#0d67a6" stroke-width="2.2" stroke-linecap="round" stroke-linejoin="round"/><circle cx="32.3" cy="14" r="2.9" fill="none" stroke="#0d67a6" stroke-width="2.2" stroke-linecap="round" stroke-linejoin="round"/>
<path d="M19.5,11 A13,13 0 1 1 33.5,27" fill="none" stroke="#0d67a6" stroke-width="2.4" stroke-linecap="round" stroke-linejoin="round"/></svg><div class="l one">Barang &amp; Jasa</div></div>
<div class="tile b" style="left:513.1px;top:521.1px"><svg style="left:44.0px;top:24.4px" width="48" height="48" viewBox="0 0 48 48"><path d="M1.2,43 V17 L22.8,1.5 L44.4,17 V43 Q44.4,44.8 42.6,44.8 H3 Q1.2,44.8 1.2,43 Z" fill="none" stroke="#0d67a6" stroke-width="2.4" stroke-linecap="round" stroke-linejoin="round"/><rect x="12.2" y="23.6" width="21.2" height="21.2" fill="none" stroke="#0d67a6" stroke-width="2.4" stroke-linecap="round" stroke-linejoin="round"/><path d="M12.2,29.5 H33.4 M12.2,37 H33.4" fill="none" stroke="#0d67a6" stroke-width="2.4" stroke-linecap="round" stroke-linejoin="round"/></svg><div class="l one">Gudang</div></div>
<div class="tile b" style="left:659.5px;top:521.1px"><svg style="left:43.3px;top:23.8px" width="48" height="48" viewBox="0 0 48 48"><circle cx="23.5" cy="6.6" r="5" fill="none" stroke="#0d67a6" stroke-width="2.4" stroke-linecap="round" stroke-linejoin="round"/><path d="M11.5,13.2 H35.5 Q37.5,13.2 38.2,15.2 L45.8,41.5 Q46.5,45.3 42.8,45.3 H3.7 Q0,45.3 0.8,41.5 L8.8,15.2 Q9.5,13.2 11.5,13.2 Z" fill="none" stroke="#0d67a6" stroke-width="2.4" stroke-linecap="round" stroke-linejoin="round"/>
<text x="23.8" y="36" text-anchor="middle" font-family="Liberation Sans" font-weight="bold" font-size="16.5" fill="#0d67a6" letter-spacing="0.5">KG</text></svg><div class="l one">Satuan Barang</div></div>
<div class="tile b" style="left:805.9px;top:521.1px"><svg style="left:46.9px;top:24.1px" width="48" height="48" viewBox="0 0 48 48"><rect x="0.9" y="0.9" width="12.5" height="10.8" rx="2.5" fill="#fff" stroke="#0d67a6" stroke-width="1.8"/><path d="M5.2,1.0 v3.5 h4 v-3.5 M4.5,8.5 h3" fill="none" stroke="#0d67a6" stroke-width="1.1"/><rect x="19.8" y="1.2" width="17.3" height="10" rx="2" fill="#fff" stroke="#0d67a6" stroke-width="2.5"/><text x="28.5" y="9.0" text-anchor="middle" font-family="Liberation Sans" font-weight="bold" font-size="6" fill="#0d67a6">A</text><rect x="0.9" y="17.5" width="12.5" height="10.8" rx="2.5" fill="#fff" stroke="#0d67a6" stroke-width="1.8"/><path d="M5.2,17.6 v3.5 h4 v-3.5 M4.5,25.1 h3" fill="none" stroke="#0d67a6" stroke-width="1.1"/><rect x="19.8" y="17.8" width="17.3" height="10" rx="2" fill="#fff" stroke="#0d67a6" stroke-width="2.5"/><text x="28.5" y="25.6" text-anchor="middle" font-family="Liberation Sans" font-weight="bold" font-size="6" fill="#0d67a6">B</text><rect x="0.9" y="34.5" width="12.5" height="10.8" rx="2.5" fill="#fff" stroke="#0d67a6" stroke-width="1.8"/><path d="M5.2,34.6 v3.5 h4 v-3.5 M4.5,42.1 h3" fill="none" stroke="#0d67a6" stroke-width="1.1"/><rect x="19.8" y="34.8" width="17.3" height="10" rx="2" fill="#fff" stroke="#0d67a6" stroke-width="2.5"/><text x="28.5" y="42.6" text-anchor="middle" font-family="Liberation Sans" font-weight="bold" font-size="6" fill="#0d67a6">C</text></svg><div class="l one">Kategori Barang</div></div>
<div class="tile b" style="left:74.0px;top:667.1px"><svg style="left:43.2px;top:23.7px" width="48" height="48" viewBox="0 0 48 48"><path d="M11.5,45.5 H6 Q1.2,45.5 1.2,40.7 V6 Q1.2,1.2 6,1.2 H41 Q45.8,1.2 45.8,6 V40.7 Q45.8,45.5 41,45.5 H37.2" fill="none" stroke="#0d67a6" stroke-width="2.4" stroke-linecap="round" stroke-linejoin="round"/>
<path d="M16.7,1.2 V11.5 L23.6,8 L30.6,11.5 V1.2" fill="none" stroke="#0d67a6" stroke-width="2.4" stroke-linecap="round" stroke-linejoin="round"/><path d="M5.5,13.3 H9.5 M34.5,13.3 H40.5" fill="none" stroke="#0d67a6" stroke-width="2.4" stroke-linecap="round" stroke-linejoin="round"/>
<path d="M37.90,30.90 L37.31,31.94 L36.11,32.80 L35.39,33.61 L35.68,34.66 L36.39,35.96 L36.47,37.15 L35.49,37.82 L34.03,38.08 L33.04,38.51 L32.85,39.57 L32.92,41.05 L32.48,42.16 L31.30,42.34 L29.88,41.94 L28.79,41.89 L28.16,42.77 L27.58,44.13 L26.70,44.94 L25.56,44.60 L24.45,43.61 L23.50,43.10 L22.55,43.61 L21.44,44.60 L20.30,44.94 L19.42,44.13 L18.84,42.77 L18.21,41.89 L17.13,41.94 L15.70,42.34 L14.52,42.16 L14.08,41.05 L14.15,39.57 L13.96,38.51 L12.97,38.08 L11.51,37.83 L10.53,37.15 L10.61,35.96 L11.32,34.66 L11.61,33.61 L10.89,32.80 L9.69,31.94 L9.10,30.90 L9.69,29.86 L10.89,29.00 L11.61,28.19 L11.32,27.14 L10.61,25.84 L10.53,24.65 L11.51,23.98 L12.97,23.72 L13.96,23.29 L14.15,22.23 L14.08,20.75 L14.52,19.64 L15.70,19.46 L17.12,19.86 L18.21,19.91 L18.84,19.03 L19.42,17.67 L20.30,16.86 L21.44,17.20 L22.55,18.19 L23.50,18.70 L24.45,18.19 L25.56,17.20 L26.70,16.86 L27.58,17.67 L28.16,19.03 L28.79,19.91 L29.87,19.86 L31.30,19.46 L32.48,19.64 L32.92,20.75 L32.85,22.23 L33.04,23.29 L34.03,23.72 L35.49,23.97 L36.47,24.65 L36.39,25.84 L35.68,27.14 L35.39,28.19 L36.11,29.00 L37.31,29.86 L37.90,30.90Z" fill="none" stroke="#0d67a6" stroke-width="2.4" stroke-linecap="round" stroke-linejoin="round"/><path d="M15.5,28 A8.5,8.5 0 0 1 31.5,28 M31.5,34 A8.5,8.5 0 0 1 15.5,34" fill="none" stroke="#0d67a6" stroke-width="2.2" stroke-linecap="round" stroke-linejoin="round"/>
<path d="M23.5,27.5 L24.6,29.8 L27,30.2 L25.2,31.8 L25.7,34.2 L23.5,33 L21.3,34.2 L21.8,31.8 L20,30.2 L22.4,29.8 Z" fill="#0d67a6" stroke="#0d67a6" stroke-width="0.8"/></svg><div class="l one">Merek Barang</div></div>
<div class="tile p" style="left:220.4px;top:667.1px"><svg style="left:43.3px;top:23.7px" width="48" height="48" viewBox="0 0 48 48"><path d="M26.3,44.8 H6.2 Q1.2,44.8 1.2,39.8 V6.2 Q1.2,1.2 6.2,1.2 H32.1 Q37.1,1.2 37.1,6.2 V21" fill="none" stroke="#5a0c97" stroke-width="2.4" stroke-linecap="round" stroke-linejoin="round"/><rect x="7.00" y="6.70" width="18.70" height="18.90" rx="4.5" fill="none" stroke="#5a0c97" stroke-width="2.4" stroke-linecap="round" stroke-linejoin="round"/><path d="M12.98,6.70 V15.02 H19.72 V6.70" fill="none" stroke="#5a0c97" stroke-width="2.4" stroke-linecap="round" stroke-linejoin="round"/><path d="M12.24,20.69 H16.35" fill="none" stroke="#5a0c97" stroke-width="2.4" stroke-linecap="round" stroke-linejoin="round"/><path d="M6.5,32.3 H19" fill="none" stroke="#5a0c97" stroke-width="2.4" stroke-linecap="round" stroke-linejoin="round"/><circle cx="34.2" cy="33.6" r="8.2" fill="none" stroke="#5a0c97" stroke-width="2.4" stroke-linecap="round" stroke-linejoin="round"/><path d="M40,39.5 L45.5,45" fill="none" stroke="#5a0c97" stroke-width="2.4" stroke-linecap="round" stroke-linejoin="round"/></svg><div class="l">Pemenuhan<br>Pesanan</div></div>
<div class="tile p" style="left:366.8px;top:667.1px"><svg style="left:44.0px;top:24.2px" width="48" height="48" viewBox="0 0 48 48"><path d="M1.2,16 L23.3,1.3 L45,16" fill="none" stroke="#5a0c97" stroke-width="2.4" stroke-linecap="round" stroke-linejoin="round"/><path d="M6.2,14 V44.4 H40.7 V14" fill="none" stroke="#5a0c97" stroke-width="2.4" stroke-linecap="round" stroke-linejoin="round"/><path d="M15,15.6 H32" fill="none" stroke="#5a0c97" stroke-width="2.4" stroke-linecap="round" stroke-linejoin="round"/>
<path d="M12.2,44.4 V25.8 H34.7 V44.4" fill="none" stroke="#5a0c97" stroke-width="2.4" stroke-linecap="round" stroke-linejoin="round"/><g fill="#5a0c97"><rect x="20.3" y="28.9" width="6" height="5.4"/><rect x="16.6" y="36" width="6" height="5.6"/><rect x="24.2" y="36" width="6" height="5.6"/></g></svg><div class="l">Barang per<br>Gudang</div></div>
<div class="tile p" style="left:513.1px;top:667.1px"><svg style="left:43.4px;top:23.7px" width="48" height="48" viewBox="0 0 48 48"><path d="M5,17.5 A18.3,16.5 0 0 1 41.6,17.5" fill="none" stroke="#5a0c97" stroke-width="2.4" stroke-linecap="round" stroke-linejoin="round"/><path d="M28.5,12 A4.8,4.8 0 0 0 19,11.5 V19" fill="none" stroke="#5a0c97" stroke-width="2.4" stroke-linecap="round" stroke-linejoin="round"/><path d="M16.3,16.5 L19,19.5 L21.7,16.5" fill="none" stroke="#5a0c97" stroke-width="2.4" stroke-linecap="round" stroke-linejoin="round"/>
<path d="M5.5,30.3 V44.5 H41 V30.3" fill="none" stroke="#5a0c97" stroke-width="2.4" stroke-linecap="round" stroke-linejoin="round"/><path d="M1,30.3 L6.2,23.7 H40.5 L45.6,30.3 H27.5 L23.3,24 L19,30.3 Z" fill="none" stroke="#5a0c97" stroke-width="2.4" stroke-linecap="round" stroke-linejoin="round"/><path d="M23.3,24 V44.5" fill="none" stroke="#5a0c97" stroke-width="2.4" stroke-linecap="round" stroke-linejoin="round"/><path d="M28,38.8 H37" fill="none" stroke="#5a0c97" stroke-width="2.4" stroke-linecap="round" stroke-linejoin="round"/></svg><div class="l">Barang Stok<br>Minimum</div></div>
<div class="a" style="left:60px;top:358px;width:163.5px;height:166.5px;border:4.5px solid #ed1c24"></div>
</body></html>
